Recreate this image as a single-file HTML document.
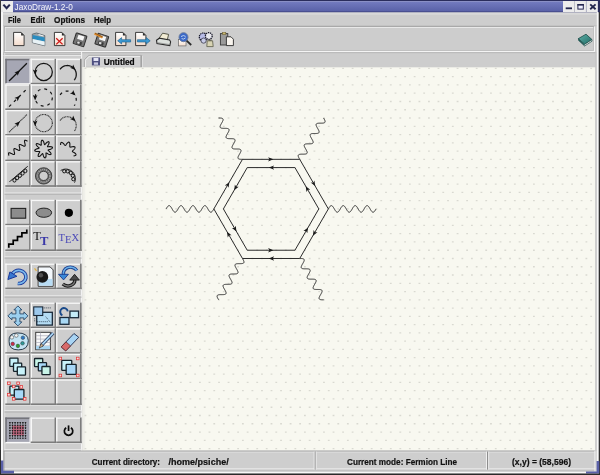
<!DOCTYPE html>
<html><head><meta charset="utf-8"><style>html,body{margin:0;padding:0;width:600px;height:475px;overflow:hidden;background:#d4d4d4}svg{display:block}</style></head>
<body><svg width="600" height="475" viewBox="0 0 600 475"><rect x="0.00" y="0.00" width="600.00" height="475.00" fill="#cdcdcd" /><defs><linearGradient id="tbg" x1="0" y1="0" x2="0" y2="1"><stop offset="0" stop-color="#7880c4"/><stop offset="1" stop-color="#565ea4"/></linearGradient></defs><rect x="0.00" y="0.00" width="600.00" height="12.50" fill="url(#tbg)" /><rect x="0.00" y="0.00" width="600.00" height="1.00" fill="#2a2d5c" /><rect x="1.00" y="1.00" width="599.00" height="1.00" fill="#8a90c6" /><rect x="0.00" y="11.50" width="600.00" height="1.00" fill="#3a3e7a" /><rect x="1.00" y="1.00" width="12.00" height="11.60" fill="#ececec" /><polyline points="3.4,4.6 6.6,8.2 9.8,4.6" fill="none" stroke="#23264e" stroke-width="2.1"/><g style="will-change:transform"><text x="14.60" y="10.40" font-family="Liberation Sans" font-size="9.2" font-weight="normal" fill="#f8f8fc" textLength="58.20" lengthAdjust="spacingAndGlyphs" >JaxoDraw-1.2-0</text></g><rect x="563.00" y="1.00" width="11.30" height="11.00" fill="#ececec" /><rect x="574.70" y="1.00" width="11.30" height="11.00" fill="#ececec" /><rect x="586.50" y="1.00" width="11.30" height="11.00" fill="#ececec" /><rect x="574.00" y="1.00" width="0.70" height="11.00" fill="#c8c8c8" /><rect x="585.80" y="1.00" width="0.70" height="11.00" fill="#c8c8c8" /><rect x="565.70" y="7.40" width="6.30" height="1.80" fill="#23264e" /><rect x="577.9" y="4.6" width="5.4" height="4.5" fill="#f0f0ff" stroke="#23264e" stroke-width="1.0"/><rect x="577.40" y="4.00" width="6.40" height="1.60" fill="#23264e" /><path d="M590.2,4.4 L595.6,9.2 M595.6,4.4 L590.2,9.2" stroke="#23264e" stroke-width="1.9"/><rect x="598.00" y="0.00" width="2.00" height="12.50" fill="#2a2d5c" /><rect x="3.00" y="12.50" width="594.00" height="13.00" fill="#cdcdcd" /><rect x="3.00" y="12.60" width="594.00" height="2.20" fill="#d8d8d8" /><rect x="3.00" y="25.40" width="594.00" height="0.80" fill="#bdbdbd" /><g style="will-change:transform"><text x="7.90" y="22.90" font-family="Liberation Sans" font-size="8.8" font-weight="bold" fill="#101010" textLength="12.90" lengthAdjust="spacingAndGlyphs" stroke="#101010" stroke-width="0.22">File</text></g><g style="will-change:transform"><text x="30.60" y="22.90" font-family="Liberation Sans" font-size="8.8" font-weight="bold" fill="#101010" textLength="14.40" lengthAdjust="spacingAndGlyphs" stroke="#101010" stroke-width="0.22">Edit</text></g><g style="will-change:transform"><text x="54.00" y="22.90" font-family="Liberation Sans" font-size="8.8" font-weight="bold" fill="#101010" textLength="31.00" lengthAdjust="spacingAndGlyphs" stroke="#101010" stroke-width="0.22">Options</text></g><g style="will-change:transform"><text x="94.00" y="22.90" font-family="Liberation Sans" font-size="8.8" font-weight="bold" fill="#101010" textLength="17.00" lengthAdjust="spacingAndGlyphs" stroke="#101010" stroke-width="0.22">Help</text></g><rect x="3.80" y="26.60" width="591.50" height="25.00" fill="#cdcdcd" /><rect x="4.10" y="26.30" width="589.90" height="0.90" fill="#9a9a9a" /><rect x="4.80" y="27.10" width="588.50" height="0.80" fill="#f2f2f2" /><rect x="4.10" y="26.60" width="0.80" height="24.40" fill="#a0a0a0" /><rect x="4.80" y="27.20" width="0.70" height="23.10" fill="#f0f0f0" /><rect x="5.70" y="50.20" width="587.60" height="0.70" fill="#b4b4b4" /><rect x="593.20" y="27.20" width="0.70" height="23.70" fill="#b4b4b4" /><rect x="5.00" y="50.90" width="590.00" height="1.10" fill="#f4f4f4" /><rect x="593.90" y="26.60" width="1.10" height="25.40" fill="#f4f4f4" /><rect x="3.20" y="52.10" width="593.60" height="1.10" fill="#bababa" /><defs>
<linearGradient id="docg" x1="0" y1="0" x2="0" y2="1"><stop offset="0" stop-color="#ffffff"/><stop offset="1" stop-color="#f4dccc"/></linearGradient>
<linearGradient id="blueg" x1="0" y1="0" x2="0" y2="1"><stop offset="0" stop-color="#7cc4e8"/><stop offset="0.5" stop-color="#1f82b8"/><stop offset="1" stop-color="#3a9ccc"/></linearGradient>
<linearGradient id="bookg" x1="0" y1="0" x2="1" y2="1"><stop offset="0" stop-color="#5fb0a8"/><stop offset="1" stop-color="#1e6a64"/></linearGradient>
</defs><path d="M13.6,32.4 L21.1,32.4 L24.1,35.4 L24.1,45.599999999999994 L13.6,45.599999999999994 Z" fill="url(#docg)" stroke="#2a2a2a" stroke-width="0.9"/><path d="M21.1,32.4 L24.1,35.4 L21.1,35.4 Z" fill="#2a2a2a"/><path d="M32.3,34.2 L36.5,33.0 L44.8,35.6 L44.8,45.8 L32.3,42.6 Z" fill="#9aa4aa" stroke="#606a70" stroke-width="0.9"/><path d="M32.6,35.0 L44.6,37.6 L44.6,41.6 L32.6,39.0 Z" fill="#2a8cc0"/><path d="M32.6,39.0 L44.6,41.6 L44.6,45.4 L32.6,42.4 Z" fill="#e8f2f6"/><path d="M38.5,34.0 L43.5,35.4 L43.5,36.4 L38.5,35.2 Z" fill="#f0f0f0"/><path d="M54.4,32.4 L61.900000000000006,32.4 L64.9,35.4 L64.9,45.599999999999994 L54.4,45.599999999999994 Z" fill="url(#docg)" stroke="#2a2a2a" stroke-width="0.9"/><path d="M61.900000000000006,32.4 L64.9,35.4 L61.900000000000006,35.4 Z" fill="#2a2a2a"/><path d="M56.2,38.2 L62.6,44.4 M62.6,38.2 L56.2,44.4" stroke="#d01818" stroke-width="1.3"/><g transform="rotate(18 80 39.8)"><rect x="74.4" y="34.2" width="11.2" height="11.2" rx="0.8" fill="#767676" stroke="#2e2e2e" stroke-width="1.0"/><rect x="77.0" y="35.4" width="6.2" height="4.4" fill="#f6f6f6"/><rect x="77.4" y="41.6" width="5.4" height="3.0" fill="#3a3a3a"/><rect x="78.2" y="42.0" width="2.4" height="2.0" fill="#e0e0e0"/></g><g transform="rotate(18 101.8 40.2)"><rect x="96.2" y="34.6" width="11.2" height="11.2" rx="0.8" fill="#767676" stroke="#2e2e2e" stroke-width="1.0"/><rect x="98.8" y="35.8" width="6.2" height="4.4" fill="#f6f6f6"/><rect x="99.2" y="42.0" width="5.4" height="3.0" fill="#3a3a3a"/><rect x="100.0" y="42.4" width="2.4" height="2.0" fill="#e0e0e0"/></g><path d="M94.5,33.5 L102.5,37.5" stroke="#e08a28" stroke-width="2.2"/><path d="M95,33.2 L102.8,37" stroke="#5a3a18" stroke-width="0.6"/><path d="M115.6,32.4 L122.89999999999999,32.4 L125.89999999999999,35.4 L125.89999999999999,45.599999999999994 L115.6,45.599999999999994 Z" fill="url(#docg)" stroke="#2a2a2a" stroke-width="0.9"/><path d="M122.89999999999999,32.4 L125.89999999999999,35.4 L122.89999999999999,35.4 Z" fill="#2a2a2a"/><path d="M117.6,40.8 L121.6,37.6 L121.6,39.7 L130.6,39.7 L130.6,42.0 L121.6,42.0 L121.6,44.0 Z" fill="#3c9ad4" stroke="#1a5a88" stroke-width="0.6"/><path d="M135.6,32.4 L142.9,32.4 L145.9,35.4 L145.9,45.599999999999994 L135.6,45.599999999999994 Z" fill="url(#docg)" stroke="#2a2a2a" stroke-width="0.9"/><path d="M142.9,32.4 L145.9,35.4 L142.9,35.4 Z" fill="#2a2a2a"/><path d="M150.2,40.8 L146.2,37.6 L146.2,39.7 L137.4,39.7 L137.4,42.0 L146.2,42.0 L146.2,44.0 Z" fill="#3c9ad4" stroke="#1a5a88" stroke-width="0.6"/><path d="M158.5,39.0 L162.6,33.2 L168.6,34.4 L167.2,40.4 Z" fill="#f2ecd4" stroke="#4a4a3a" stroke-width="0.9"/><path d="M156.5,40.2 L159.4,38.2 L169.6,40.0 L170.6,41.8 L169.8,45.6 L157.0,43.6 Z" fill="#dce0dc" stroke="#2a2a2a" stroke-width="1.1"/><path d="M157.2,42.6 L169.8,44.6" stroke="#8a8a8a" stroke-width="0.7"/><rect x="178.6" y="39.5" width="7.4" height="6.4" fill="url(#docg)" stroke="#6a6a6a" stroke-width="0.7"/><circle cx="183.5" cy="37.2" r="4.5" fill="#3a68c8" stroke="#6a7a9a" stroke-width="0.9"/><path d="M181.0,36.6 Q183.4,34.6 185.6,36.4 M181.6,38.6 Q183.6,40 185.6,37.8" stroke="#c8dcf4" stroke-width="0.9" fill="none"/><path d="M186.6,40.6 L191.2,45.0" stroke="#2a2a2a" stroke-width="1.8"/><circle cx="203.2" cy="37.0" r="3.9" fill="#b8bce8" stroke="#1a1a2a" stroke-width="1.3" stroke-dasharray="1.4,0.7"/><circle cx="208.8" cy="36.0" r="3.4" fill="#e8e8ee" stroke="#1a1a2a" stroke-width="1.3" stroke-dasharray="1.4,0.7"/><circle cx="203.6" cy="40.6" r="2.6" fill="#c8cce8" stroke="#3a3a4a" stroke-width="0.8"/><path d="M207.2,40.8 L212.6,40.8 L213.2,46.6 L206.8,46.6 Z" fill="#d8d4b4" stroke="#5a5a48" stroke-width="0.8"/><rect x="208.6" y="39.6" width="3" height="1.4" fill="#6a6a5a"/><rect x="220.4" y="33.6" width="7.4" height="11.4" fill="#9a9a9a" stroke="#3a3a3a" stroke-width="0.9"/><rect x="222.6" y="32.4" width="3.2" height="2" fill="#c8b870" stroke="#6a5a2a" stroke-width="0.5"/><path d="M226.4,36.8 L231,36.8 L233.4,39.2 L233.4,45.6 L226.4,45.6 Z" fill="#f8f4ee" stroke="#2a2a2a" stroke-width="0.9"/><path d="M578.4,38.6 L586.0,34.2 L592.0,39.6 L584.6,44.4 Z" fill="url(#bookg)" stroke="#1a4844" stroke-width="0.8"/><path d="M578.4,38.6 L578.6,40.4 L584.6,46.0 L592.0,41.2 L592.0,39.6 L584.6,44.4 Z" fill="#f4f4f4" stroke="#1a4844" stroke-width="0.7"/><path d="M578.4,38.6 L584.6,44.4 L584.6,46.0 L578.6,40.4 Z" fill="#1e5a56"/><rect x="3.00" y="54.30" width="78.00" height="0.90" fill="#b4b4b4" /><rect x="3.00" y="55.20" width="78.00" height="0.80" fill="#f0f0f0" /><path d="M84.4,67.4 L84.4,59.8 L88.8,55.4 L141.6,55.4 L141.6,67.4 Z" fill="#d2d2d2" stroke="#9c9c9c" stroke-width="0.8"/><path d="M85.4,67.2 L85.4,60.2 L89.2,56.3 L140.4,56.3" fill="none" stroke="#f4f4f4" stroke-width="0.9"/><rect x="140.60" y="56.00" width="1.20" height="11.40" fill="#8a8a8a" /><rect x="141.80" y="56.00" width="0.80" height="11.40" fill="#ececec" /><rect x="91.90" y="57.50" width="8.10" height="7.90" fill="#4e5080" /><rect x="93.50" y="58.00" width="4.90" height="3.00" fill="#e4e4f4" /><rect x="93.90" y="62.40" width="4.10" height="2.40" fill="#c8c8e0" /><g style="will-change:transform"><text x="103.70" y="64.50" font-family="Liberation Sans" font-size="8.6" font-weight="bold" fill="#0a0a0a" textLength="31.00" lengthAdjust="spacingAndGlyphs" stroke="#0a0a0a" stroke-width="0.2">Untitled</text></g><rect x="82.30" y="67.30" width="513.10" height="383.40" fill="#f8f8f0" /><rect x="82.00" y="67.30" width="1.60" height="383.40" fill="#e6e6e0" /><rect x="83.60" y="67.30" width="1.60" height="383.40" fill="#f0f0ea" /><rect x="81.00" y="51.50" width="1.10" height="399.50" fill="#f2f2f2" /><rect x="595.40" y="52.00" width="1.40" height="399.00" fill="#c4c4c4" /><path d="M84.53,68.43h1.8M94.07,68.43h1.8M103.61,68.43h1.8M113.16,68.43h1.8M122.70,68.43h1.8M132.24,68.43h1.8M141.78,68.43h1.8M151.32,68.43h1.8M160.87,68.43h1.8M170.41,68.43h1.8M179.95,68.43h1.8M189.49,68.43h1.8M199.03,68.43h1.8M208.58,68.43h1.8M218.12,68.43h1.8M227.66,68.43h1.8M237.20,68.43h1.8M246.74,68.43h1.8M256.29,68.43h1.8M265.83,68.43h1.8M275.37,68.43h1.8M284.91,68.43h1.8M294.45,68.43h1.8M304.00,68.43h1.8M313.54,68.43h1.8M323.08,68.43h1.8M332.62,68.43h1.8M342.16,68.43h1.8M351.71,68.43h1.8M361.25,68.43h1.8M370.79,68.43h1.8M380.33,68.43h1.8M389.87,68.43h1.8M399.42,68.43h1.8M408.96,68.43h1.8M418.50,68.43h1.8M428.04,68.43h1.8M437.58,68.43h1.8M447.13,68.43h1.8M456.67,68.43h1.8M466.21,68.43h1.8M475.75,68.43h1.8M485.29,68.43h1.8M494.84,68.43h1.8M504.38,68.43h1.8M513.92,68.43h1.8M523.46,68.43h1.8M533.00,68.43h1.8M542.55,68.43h1.8M552.09,68.43h1.8M561.63,68.43h1.8M571.17,68.43h1.8M580.71,68.43h1.8M590.26,68.43h1.8M89.30,76.69h1.8M98.84,76.69h1.8M108.39,76.69h1.8M117.93,76.69h1.8M127.47,76.69h1.8M137.01,76.69h1.8M146.55,76.69h1.8M156.09,76.69h1.8M165.64,76.69h1.8M175.18,76.69h1.8M184.72,76.69h1.8M194.26,76.69h1.8M203.81,76.69h1.8M213.35,76.69h1.8M222.89,76.69h1.8M232.43,76.69h1.8M241.97,76.69h1.8M251.51,76.69h1.8M261.06,76.69h1.8M270.60,76.69h1.8M280.14,76.69h1.8M289.68,76.69h1.8M299.23,76.69h1.8M308.77,76.69h1.8M318.31,76.69h1.8M327.85,76.69h1.8M337.39,76.69h1.8M346.94,76.69h1.8M356.48,76.69h1.8M366.02,76.69h1.8M375.56,76.69h1.8M385.10,76.69h1.8M394.64,76.69h1.8M404.19,76.69h1.8M413.73,76.69h1.8M423.27,76.69h1.8M432.81,76.69h1.8M442.35,76.69h1.8M451.90,76.69h1.8M461.44,76.69h1.8M470.98,76.69h1.8M480.52,76.69h1.8M490.06,76.69h1.8M499.61,76.69h1.8M509.15,76.69h1.8M518.69,76.69h1.8M528.23,76.69h1.8M537.77,76.69h1.8M547.32,76.69h1.8M556.86,76.69h1.8M566.40,76.69h1.8M575.94,76.69h1.8M585.49,76.69h1.8M84.53,84.96h1.8M94.07,84.96h1.8M103.61,84.96h1.8M113.16,84.96h1.8M122.70,84.96h1.8M132.24,84.96h1.8M141.78,84.96h1.8M151.32,84.96h1.8M160.87,84.96h1.8M170.41,84.96h1.8M179.95,84.96h1.8M189.49,84.96h1.8M199.03,84.96h1.8M208.58,84.96h1.8M218.12,84.96h1.8M227.66,84.96h1.8M237.20,84.96h1.8M246.74,84.96h1.8M256.29,84.96h1.8M265.83,84.96h1.8M275.37,84.96h1.8M284.91,84.96h1.8M294.45,84.96h1.8M304.00,84.96h1.8M313.54,84.96h1.8M323.08,84.96h1.8M332.62,84.96h1.8M342.16,84.96h1.8M351.71,84.96h1.8M361.25,84.96h1.8M370.79,84.96h1.8M380.33,84.96h1.8M389.87,84.96h1.8M399.42,84.96h1.8M408.96,84.96h1.8M418.50,84.96h1.8M428.04,84.96h1.8M437.58,84.96h1.8M447.13,84.96h1.8M456.67,84.96h1.8M466.21,84.96h1.8M475.75,84.96h1.8M485.29,84.96h1.8M494.84,84.96h1.8M504.38,84.96h1.8M513.92,84.96h1.8M523.46,84.96h1.8M533.00,84.96h1.8M542.55,84.96h1.8M552.09,84.96h1.8M561.63,84.96h1.8M571.17,84.96h1.8M580.71,84.96h1.8M590.26,84.96h1.8M89.30,93.22h1.8M98.84,93.22h1.8M108.39,93.22h1.8M117.93,93.22h1.8M127.47,93.22h1.8M137.01,93.22h1.8M146.55,93.22h1.8M156.09,93.22h1.8M165.64,93.22h1.8M175.18,93.22h1.8M184.72,93.22h1.8M194.26,93.22h1.8M203.81,93.22h1.8M213.35,93.22h1.8M222.89,93.22h1.8M232.43,93.22h1.8M241.97,93.22h1.8M251.51,93.22h1.8M261.06,93.22h1.8M270.60,93.22h1.8M280.14,93.22h1.8M289.68,93.22h1.8M299.23,93.22h1.8M308.77,93.22h1.8M318.31,93.22h1.8M327.85,93.22h1.8M337.39,93.22h1.8M346.94,93.22h1.8M356.48,93.22h1.8M366.02,93.22h1.8M375.56,93.22h1.8M385.10,93.22h1.8M394.64,93.22h1.8M404.19,93.22h1.8M413.73,93.22h1.8M423.27,93.22h1.8M432.81,93.22h1.8M442.35,93.22h1.8M451.90,93.22h1.8M461.44,93.22h1.8M470.98,93.22h1.8M480.52,93.22h1.8M490.06,93.22h1.8M499.61,93.22h1.8M509.15,93.22h1.8M518.69,93.22h1.8M528.23,93.22h1.8M537.77,93.22h1.8M547.32,93.22h1.8M556.86,93.22h1.8M566.40,93.22h1.8M575.94,93.22h1.8M585.49,93.22h1.8M84.53,101.48h1.8M94.07,101.48h1.8M103.61,101.48h1.8M113.16,101.48h1.8M122.70,101.48h1.8M132.24,101.48h1.8M141.78,101.48h1.8M151.32,101.48h1.8M160.87,101.48h1.8M170.41,101.48h1.8M179.95,101.48h1.8M189.49,101.48h1.8M199.03,101.48h1.8M208.58,101.48h1.8M218.12,101.48h1.8M227.66,101.48h1.8M237.20,101.48h1.8M246.74,101.48h1.8M256.29,101.48h1.8M265.83,101.48h1.8M275.37,101.48h1.8M284.91,101.48h1.8M294.45,101.48h1.8M304.00,101.48h1.8M313.54,101.48h1.8M323.08,101.48h1.8M332.62,101.48h1.8M342.16,101.48h1.8M351.71,101.48h1.8M361.25,101.48h1.8M370.79,101.48h1.8M380.33,101.48h1.8M389.87,101.48h1.8M399.42,101.48h1.8M408.96,101.48h1.8M418.50,101.48h1.8M428.04,101.48h1.8M437.58,101.48h1.8M447.13,101.48h1.8M456.67,101.48h1.8M466.21,101.48h1.8M475.75,101.48h1.8M485.29,101.48h1.8M494.84,101.48h1.8M504.38,101.48h1.8M513.92,101.48h1.8M523.46,101.48h1.8M533.00,101.48h1.8M542.55,101.48h1.8M552.09,101.48h1.8M561.63,101.48h1.8M571.17,101.48h1.8M580.71,101.48h1.8M590.26,101.48h1.8M89.30,109.75h1.8M98.84,109.75h1.8M108.39,109.75h1.8M117.93,109.75h1.8M127.47,109.75h1.8M137.01,109.75h1.8M146.55,109.75h1.8M156.09,109.75h1.8M165.64,109.75h1.8M175.18,109.75h1.8M184.72,109.75h1.8M194.26,109.75h1.8M203.81,109.75h1.8M213.35,109.75h1.8M222.89,109.75h1.8M232.43,109.75h1.8M241.97,109.75h1.8M251.51,109.75h1.8M261.06,109.75h1.8M270.60,109.75h1.8M280.14,109.75h1.8M289.68,109.75h1.8M299.23,109.75h1.8M308.77,109.75h1.8M318.31,109.75h1.8M327.85,109.75h1.8M337.39,109.75h1.8M346.94,109.75h1.8M356.48,109.75h1.8M366.02,109.75h1.8M375.56,109.75h1.8M385.10,109.75h1.8M394.64,109.75h1.8M404.19,109.75h1.8M413.73,109.75h1.8M423.27,109.75h1.8M432.81,109.75h1.8M442.35,109.75h1.8M451.90,109.75h1.8M461.44,109.75h1.8M470.98,109.75h1.8M480.52,109.75h1.8M490.06,109.75h1.8M499.61,109.75h1.8M509.15,109.75h1.8M518.69,109.75h1.8M528.23,109.75h1.8M537.77,109.75h1.8M547.32,109.75h1.8M556.86,109.75h1.8M566.40,109.75h1.8M575.94,109.75h1.8M585.49,109.75h1.8M84.53,118.01h1.8M94.07,118.01h1.8M103.61,118.01h1.8M113.16,118.01h1.8M122.70,118.01h1.8M132.24,118.01h1.8M141.78,118.01h1.8M151.32,118.01h1.8M160.87,118.01h1.8M170.41,118.01h1.8M179.95,118.01h1.8M189.49,118.01h1.8M199.03,118.01h1.8M208.58,118.01h1.8M218.12,118.01h1.8M227.66,118.01h1.8M237.20,118.01h1.8M246.74,118.01h1.8M256.29,118.01h1.8M265.83,118.01h1.8M275.37,118.01h1.8M284.91,118.01h1.8M294.45,118.01h1.8M304.00,118.01h1.8M313.54,118.01h1.8M323.08,118.01h1.8M332.62,118.01h1.8M342.16,118.01h1.8M351.71,118.01h1.8M361.25,118.01h1.8M370.79,118.01h1.8M380.33,118.01h1.8M389.87,118.01h1.8M399.42,118.01h1.8M408.96,118.01h1.8M418.50,118.01h1.8M428.04,118.01h1.8M437.58,118.01h1.8M447.13,118.01h1.8M456.67,118.01h1.8M466.21,118.01h1.8M475.75,118.01h1.8M485.29,118.01h1.8M494.84,118.01h1.8M504.38,118.01h1.8M513.92,118.01h1.8M523.46,118.01h1.8M533.00,118.01h1.8M542.55,118.01h1.8M552.09,118.01h1.8M561.63,118.01h1.8M571.17,118.01h1.8M580.71,118.01h1.8M590.26,118.01h1.8M89.30,126.28h1.8M98.84,126.28h1.8M108.39,126.28h1.8M117.93,126.28h1.8M127.47,126.28h1.8M137.01,126.28h1.8M146.55,126.28h1.8M156.09,126.28h1.8M165.64,126.28h1.8M175.18,126.28h1.8M184.72,126.28h1.8M194.26,126.28h1.8M203.81,126.28h1.8M213.35,126.28h1.8M222.89,126.28h1.8M232.43,126.28h1.8M241.97,126.28h1.8M251.51,126.28h1.8M261.06,126.28h1.8M270.60,126.28h1.8M280.14,126.28h1.8M289.68,126.28h1.8M299.23,126.28h1.8M308.77,126.28h1.8M318.31,126.28h1.8M327.85,126.28h1.8M337.39,126.28h1.8M346.94,126.28h1.8M356.48,126.28h1.8M366.02,126.28h1.8M375.56,126.28h1.8M385.10,126.28h1.8M394.64,126.28h1.8M404.19,126.28h1.8M413.73,126.28h1.8M423.27,126.28h1.8M432.81,126.28h1.8M442.35,126.28h1.8M451.90,126.28h1.8M461.44,126.28h1.8M470.98,126.28h1.8M480.52,126.28h1.8M490.06,126.28h1.8M499.61,126.28h1.8M509.15,126.28h1.8M518.69,126.28h1.8M528.23,126.28h1.8M537.77,126.28h1.8M547.32,126.28h1.8M556.86,126.28h1.8M566.40,126.28h1.8M575.94,126.28h1.8M585.49,126.28h1.8M84.53,134.54h1.8M94.07,134.54h1.8M103.61,134.54h1.8M113.16,134.54h1.8M122.70,134.54h1.8M132.24,134.54h1.8M141.78,134.54h1.8M151.32,134.54h1.8M160.87,134.54h1.8M170.41,134.54h1.8M179.95,134.54h1.8M189.49,134.54h1.8M199.03,134.54h1.8M208.58,134.54h1.8M218.12,134.54h1.8M227.66,134.54h1.8M237.20,134.54h1.8M246.74,134.54h1.8M256.29,134.54h1.8M265.83,134.54h1.8M275.37,134.54h1.8M284.91,134.54h1.8M294.45,134.54h1.8M304.00,134.54h1.8M313.54,134.54h1.8M323.08,134.54h1.8M332.62,134.54h1.8M342.16,134.54h1.8M351.71,134.54h1.8M361.25,134.54h1.8M370.79,134.54h1.8M380.33,134.54h1.8M389.87,134.54h1.8M399.42,134.54h1.8M408.96,134.54h1.8M418.50,134.54h1.8M428.04,134.54h1.8M437.58,134.54h1.8M447.13,134.54h1.8M456.67,134.54h1.8M466.21,134.54h1.8M475.75,134.54h1.8M485.29,134.54h1.8M494.84,134.54h1.8M504.38,134.54h1.8M513.92,134.54h1.8M523.46,134.54h1.8M533.00,134.54h1.8M542.55,134.54h1.8M552.09,134.54h1.8M561.63,134.54h1.8M571.17,134.54h1.8M580.71,134.54h1.8M590.26,134.54h1.8M89.30,142.80h1.8M98.84,142.80h1.8M108.39,142.80h1.8M117.93,142.80h1.8M127.47,142.80h1.8M137.01,142.80h1.8M146.55,142.80h1.8M156.09,142.80h1.8M165.64,142.80h1.8M175.18,142.80h1.8M184.72,142.80h1.8M194.26,142.80h1.8M203.81,142.80h1.8M213.35,142.80h1.8M222.89,142.80h1.8M232.43,142.80h1.8M241.97,142.80h1.8M251.51,142.80h1.8M261.06,142.80h1.8M270.60,142.80h1.8M280.14,142.80h1.8M289.68,142.80h1.8M299.23,142.80h1.8M308.77,142.80h1.8M318.31,142.80h1.8M327.85,142.80h1.8M337.39,142.80h1.8M346.94,142.80h1.8M356.48,142.80h1.8M366.02,142.80h1.8M375.56,142.80h1.8M385.10,142.80h1.8M394.64,142.80h1.8M404.19,142.80h1.8M413.73,142.80h1.8M423.27,142.80h1.8M432.81,142.80h1.8M442.35,142.80h1.8M451.90,142.80h1.8M461.44,142.80h1.8M470.98,142.80h1.8M480.52,142.80h1.8M490.06,142.80h1.8M499.61,142.80h1.8M509.15,142.80h1.8M518.69,142.80h1.8M528.23,142.80h1.8M537.77,142.80h1.8M547.32,142.80h1.8M556.86,142.80h1.8M566.40,142.80h1.8M575.94,142.80h1.8M585.49,142.80h1.8M84.53,151.07h1.8M94.07,151.07h1.8M103.61,151.07h1.8M113.16,151.07h1.8M122.70,151.07h1.8M132.24,151.07h1.8M141.78,151.07h1.8M151.32,151.07h1.8M160.87,151.07h1.8M170.41,151.07h1.8M179.95,151.07h1.8M189.49,151.07h1.8M199.03,151.07h1.8M208.58,151.07h1.8M218.12,151.07h1.8M227.66,151.07h1.8M237.20,151.07h1.8M246.74,151.07h1.8M256.29,151.07h1.8M265.83,151.07h1.8M275.37,151.07h1.8M284.91,151.07h1.8M294.45,151.07h1.8M304.00,151.07h1.8M313.54,151.07h1.8M323.08,151.07h1.8M332.62,151.07h1.8M342.16,151.07h1.8M351.71,151.07h1.8M361.25,151.07h1.8M370.79,151.07h1.8M380.33,151.07h1.8M389.87,151.07h1.8M399.42,151.07h1.8M408.96,151.07h1.8M418.50,151.07h1.8M428.04,151.07h1.8M437.58,151.07h1.8M447.13,151.07h1.8M456.67,151.07h1.8M466.21,151.07h1.8M475.75,151.07h1.8M485.29,151.07h1.8M494.84,151.07h1.8M504.38,151.07h1.8M513.92,151.07h1.8M523.46,151.07h1.8M533.00,151.07h1.8M542.55,151.07h1.8M552.09,151.07h1.8M561.63,151.07h1.8M571.17,151.07h1.8M580.71,151.07h1.8M590.26,151.07h1.8M89.30,159.33h1.8M98.84,159.33h1.8M108.39,159.33h1.8M117.93,159.33h1.8M127.47,159.33h1.8M137.01,159.33h1.8M146.55,159.33h1.8M156.09,159.33h1.8M165.64,159.33h1.8M175.18,159.33h1.8M184.72,159.33h1.8M194.26,159.33h1.8M203.81,159.33h1.8M213.35,159.33h1.8M222.89,159.33h1.8M232.43,159.33h1.8M241.97,159.33h1.8M251.51,159.33h1.8M261.06,159.33h1.8M270.60,159.33h1.8M280.14,159.33h1.8M289.68,159.33h1.8M299.23,159.33h1.8M308.77,159.33h1.8M318.31,159.33h1.8M327.85,159.33h1.8M337.39,159.33h1.8M346.94,159.33h1.8M356.48,159.33h1.8M366.02,159.33h1.8M375.56,159.33h1.8M385.10,159.33h1.8M394.64,159.33h1.8M404.19,159.33h1.8M413.73,159.33h1.8M423.27,159.33h1.8M432.81,159.33h1.8M442.35,159.33h1.8M451.90,159.33h1.8M461.44,159.33h1.8M470.98,159.33h1.8M480.52,159.33h1.8M490.06,159.33h1.8M499.61,159.33h1.8M509.15,159.33h1.8M518.69,159.33h1.8M528.23,159.33h1.8M537.77,159.33h1.8M547.32,159.33h1.8M556.86,159.33h1.8M566.40,159.33h1.8M575.94,159.33h1.8M585.49,159.33h1.8M84.53,167.59h1.8M94.07,167.59h1.8M103.61,167.59h1.8M113.16,167.59h1.8M122.70,167.59h1.8M132.24,167.59h1.8M141.78,167.59h1.8M151.32,167.59h1.8M160.87,167.59h1.8M170.41,167.59h1.8M179.95,167.59h1.8M189.49,167.59h1.8M199.03,167.59h1.8M208.58,167.59h1.8M218.12,167.59h1.8M227.66,167.59h1.8M237.20,167.59h1.8M246.74,167.59h1.8M256.29,167.59h1.8M265.83,167.59h1.8M275.37,167.59h1.8M284.91,167.59h1.8M294.45,167.59h1.8M304.00,167.59h1.8M313.54,167.59h1.8M323.08,167.59h1.8M332.62,167.59h1.8M342.16,167.59h1.8M351.71,167.59h1.8M361.25,167.59h1.8M370.79,167.59h1.8M380.33,167.59h1.8M389.87,167.59h1.8M399.42,167.59h1.8M408.96,167.59h1.8M418.50,167.59h1.8M428.04,167.59h1.8M437.58,167.59h1.8M447.13,167.59h1.8M456.67,167.59h1.8M466.21,167.59h1.8M475.75,167.59h1.8M485.29,167.59h1.8M494.84,167.59h1.8M504.38,167.59h1.8M513.92,167.59h1.8M523.46,167.59h1.8M533.00,167.59h1.8M542.55,167.59h1.8M552.09,167.59h1.8M561.63,167.59h1.8M571.17,167.59h1.8M580.71,167.59h1.8M590.26,167.59h1.8M89.30,175.86h1.8M98.84,175.86h1.8M108.39,175.86h1.8M117.93,175.86h1.8M127.47,175.86h1.8M137.01,175.86h1.8M146.55,175.86h1.8M156.09,175.86h1.8M165.64,175.86h1.8M175.18,175.86h1.8M184.72,175.86h1.8M194.26,175.86h1.8M203.81,175.86h1.8M213.35,175.86h1.8M222.89,175.86h1.8M232.43,175.86h1.8M241.97,175.86h1.8M251.51,175.86h1.8M261.06,175.86h1.8M270.60,175.86h1.8M280.14,175.86h1.8M289.68,175.86h1.8M299.23,175.86h1.8M308.77,175.86h1.8M318.31,175.86h1.8M327.85,175.86h1.8M337.39,175.86h1.8M346.94,175.86h1.8M356.48,175.86h1.8M366.02,175.86h1.8M375.56,175.86h1.8M385.10,175.86h1.8M394.64,175.86h1.8M404.19,175.86h1.8M413.73,175.86h1.8M423.27,175.86h1.8M432.81,175.86h1.8M442.35,175.86h1.8M451.90,175.86h1.8M461.44,175.86h1.8M470.98,175.86h1.8M480.52,175.86h1.8M490.06,175.86h1.8M499.61,175.86h1.8M509.15,175.86h1.8M518.69,175.86h1.8M528.23,175.86h1.8M537.77,175.86h1.8M547.32,175.86h1.8M556.86,175.86h1.8M566.40,175.86h1.8M575.94,175.86h1.8M585.49,175.86h1.8M84.53,184.12h1.8M94.07,184.12h1.8M103.61,184.12h1.8M113.16,184.12h1.8M122.70,184.12h1.8M132.24,184.12h1.8M141.78,184.12h1.8M151.32,184.12h1.8M160.87,184.12h1.8M170.41,184.12h1.8M179.95,184.12h1.8M189.49,184.12h1.8M199.03,184.12h1.8M208.58,184.12h1.8M218.12,184.12h1.8M227.66,184.12h1.8M237.20,184.12h1.8M246.74,184.12h1.8M256.29,184.12h1.8M265.83,184.12h1.8M275.37,184.12h1.8M284.91,184.12h1.8M294.45,184.12h1.8M304.00,184.12h1.8M313.54,184.12h1.8M323.08,184.12h1.8M332.62,184.12h1.8M342.16,184.12h1.8M351.71,184.12h1.8M361.25,184.12h1.8M370.79,184.12h1.8M380.33,184.12h1.8M389.87,184.12h1.8M399.42,184.12h1.8M408.96,184.12h1.8M418.50,184.12h1.8M428.04,184.12h1.8M437.58,184.12h1.8M447.13,184.12h1.8M456.67,184.12h1.8M466.21,184.12h1.8M475.75,184.12h1.8M485.29,184.12h1.8M494.84,184.12h1.8M504.38,184.12h1.8M513.92,184.12h1.8M523.46,184.12h1.8M533.00,184.12h1.8M542.55,184.12h1.8M552.09,184.12h1.8M561.63,184.12h1.8M571.17,184.12h1.8M580.71,184.12h1.8M590.26,184.12h1.8M89.30,192.38h1.8M98.84,192.38h1.8M108.39,192.38h1.8M117.93,192.38h1.8M127.47,192.38h1.8M137.01,192.38h1.8M146.55,192.38h1.8M156.09,192.38h1.8M165.64,192.38h1.8M175.18,192.38h1.8M184.72,192.38h1.8M194.26,192.38h1.8M203.81,192.38h1.8M213.35,192.38h1.8M222.89,192.38h1.8M232.43,192.38h1.8M241.97,192.38h1.8M251.51,192.38h1.8M261.06,192.38h1.8M270.60,192.38h1.8M280.14,192.38h1.8M289.68,192.38h1.8M299.23,192.38h1.8M308.77,192.38h1.8M318.31,192.38h1.8M327.85,192.38h1.8M337.39,192.38h1.8M346.94,192.38h1.8M356.48,192.38h1.8M366.02,192.38h1.8M375.56,192.38h1.8M385.10,192.38h1.8M394.64,192.38h1.8M404.19,192.38h1.8M413.73,192.38h1.8M423.27,192.38h1.8M432.81,192.38h1.8M442.35,192.38h1.8M451.90,192.38h1.8M461.44,192.38h1.8M470.98,192.38h1.8M480.52,192.38h1.8M490.06,192.38h1.8M499.61,192.38h1.8M509.15,192.38h1.8M518.69,192.38h1.8M528.23,192.38h1.8M537.77,192.38h1.8M547.32,192.38h1.8M556.86,192.38h1.8M566.40,192.38h1.8M575.94,192.38h1.8M585.49,192.38h1.8M84.53,200.65h1.8M94.07,200.65h1.8M103.61,200.65h1.8M113.16,200.65h1.8M122.70,200.65h1.8M132.24,200.65h1.8M141.78,200.65h1.8M151.32,200.65h1.8M160.87,200.65h1.8M170.41,200.65h1.8M179.95,200.65h1.8M189.49,200.65h1.8M199.03,200.65h1.8M208.58,200.65h1.8M218.12,200.65h1.8M227.66,200.65h1.8M237.20,200.65h1.8M246.74,200.65h1.8M256.29,200.65h1.8M265.83,200.65h1.8M275.37,200.65h1.8M284.91,200.65h1.8M294.45,200.65h1.8M304.00,200.65h1.8M313.54,200.65h1.8M323.08,200.65h1.8M332.62,200.65h1.8M342.16,200.65h1.8M351.71,200.65h1.8M361.25,200.65h1.8M370.79,200.65h1.8M380.33,200.65h1.8M389.87,200.65h1.8M399.42,200.65h1.8M408.96,200.65h1.8M418.50,200.65h1.8M428.04,200.65h1.8M437.58,200.65h1.8M447.13,200.65h1.8M456.67,200.65h1.8M466.21,200.65h1.8M475.75,200.65h1.8M485.29,200.65h1.8M494.84,200.65h1.8M504.38,200.65h1.8M513.92,200.65h1.8M523.46,200.65h1.8M533.00,200.65h1.8M542.55,200.65h1.8M552.09,200.65h1.8M561.63,200.65h1.8M571.17,200.65h1.8M580.71,200.65h1.8M590.26,200.65h1.8M89.30,208.91h1.8M98.84,208.91h1.8M108.39,208.91h1.8M117.93,208.91h1.8M127.47,208.91h1.8M137.01,208.91h1.8M146.55,208.91h1.8M156.09,208.91h1.8M165.64,208.91h1.8M175.18,208.91h1.8M184.72,208.91h1.8M194.26,208.91h1.8M203.81,208.91h1.8M213.35,208.91h1.8M222.89,208.91h1.8M232.43,208.91h1.8M241.97,208.91h1.8M251.51,208.91h1.8M261.06,208.91h1.8M270.60,208.91h1.8M280.14,208.91h1.8M289.68,208.91h1.8M299.23,208.91h1.8M308.77,208.91h1.8M318.31,208.91h1.8M327.85,208.91h1.8M337.39,208.91h1.8M346.94,208.91h1.8M356.48,208.91h1.8M366.02,208.91h1.8M375.56,208.91h1.8M385.10,208.91h1.8M394.64,208.91h1.8M404.19,208.91h1.8M413.73,208.91h1.8M423.27,208.91h1.8M432.81,208.91h1.8M442.35,208.91h1.8M451.90,208.91h1.8M461.44,208.91h1.8M470.98,208.91h1.8M480.52,208.91h1.8M490.06,208.91h1.8M499.61,208.91h1.8M509.15,208.91h1.8M518.69,208.91h1.8M528.23,208.91h1.8M537.77,208.91h1.8M547.32,208.91h1.8M556.86,208.91h1.8M566.40,208.91h1.8M575.94,208.91h1.8M585.49,208.91h1.8M84.53,217.18h1.8M94.07,217.18h1.8M103.61,217.18h1.8M113.16,217.18h1.8M122.70,217.18h1.8M132.24,217.18h1.8M141.78,217.18h1.8M151.32,217.18h1.8M160.87,217.18h1.8M170.41,217.18h1.8M179.95,217.18h1.8M189.49,217.18h1.8M199.03,217.18h1.8M208.58,217.18h1.8M218.12,217.18h1.8M227.66,217.18h1.8M237.20,217.18h1.8M246.74,217.18h1.8M256.29,217.18h1.8M265.83,217.18h1.8M275.37,217.18h1.8M284.91,217.18h1.8M294.45,217.18h1.8M304.00,217.18h1.8M313.54,217.18h1.8M323.08,217.18h1.8M332.62,217.18h1.8M342.16,217.18h1.8M351.71,217.18h1.8M361.25,217.18h1.8M370.79,217.18h1.8M380.33,217.18h1.8M389.87,217.18h1.8M399.42,217.18h1.8M408.96,217.18h1.8M418.50,217.18h1.8M428.04,217.18h1.8M437.58,217.18h1.8M447.13,217.18h1.8M456.67,217.18h1.8M466.21,217.18h1.8M475.75,217.18h1.8M485.29,217.18h1.8M494.84,217.18h1.8M504.38,217.18h1.8M513.92,217.18h1.8M523.46,217.18h1.8M533.00,217.18h1.8M542.55,217.18h1.8M552.09,217.18h1.8M561.63,217.18h1.8M571.17,217.18h1.8M580.71,217.18h1.8M590.26,217.18h1.8M89.30,225.44h1.8M98.84,225.44h1.8M108.39,225.44h1.8M117.93,225.44h1.8M127.47,225.44h1.8M137.01,225.44h1.8M146.55,225.44h1.8M156.09,225.44h1.8M165.64,225.44h1.8M175.18,225.44h1.8M184.72,225.44h1.8M194.26,225.44h1.8M203.81,225.44h1.8M213.35,225.44h1.8M222.89,225.44h1.8M232.43,225.44h1.8M241.97,225.44h1.8M251.51,225.44h1.8M261.06,225.44h1.8M270.60,225.44h1.8M280.14,225.44h1.8M289.68,225.44h1.8M299.23,225.44h1.8M308.77,225.44h1.8M318.31,225.44h1.8M327.85,225.44h1.8M337.39,225.44h1.8M346.94,225.44h1.8M356.48,225.44h1.8M366.02,225.44h1.8M375.56,225.44h1.8M385.10,225.44h1.8M394.64,225.44h1.8M404.19,225.44h1.8M413.73,225.44h1.8M423.27,225.44h1.8M432.81,225.44h1.8M442.35,225.44h1.8M451.90,225.44h1.8M461.44,225.44h1.8M470.98,225.44h1.8M480.52,225.44h1.8M490.06,225.44h1.8M499.61,225.44h1.8M509.15,225.44h1.8M518.69,225.44h1.8M528.23,225.44h1.8M537.77,225.44h1.8M547.32,225.44h1.8M556.86,225.44h1.8M566.40,225.44h1.8M575.94,225.44h1.8M585.49,225.44h1.8M84.53,233.70h1.8M94.07,233.70h1.8M103.61,233.70h1.8M113.16,233.70h1.8M122.70,233.70h1.8M132.24,233.70h1.8M141.78,233.70h1.8M151.32,233.70h1.8M160.87,233.70h1.8M170.41,233.70h1.8M179.95,233.70h1.8M189.49,233.70h1.8M199.03,233.70h1.8M208.58,233.70h1.8M218.12,233.70h1.8M227.66,233.70h1.8M237.20,233.70h1.8M246.74,233.70h1.8M256.29,233.70h1.8M265.83,233.70h1.8M275.37,233.70h1.8M284.91,233.70h1.8M294.45,233.70h1.8M304.00,233.70h1.8M313.54,233.70h1.8M323.08,233.70h1.8M332.62,233.70h1.8M342.16,233.70h1.8M351.71,233.70h1.8M361.25,233.70h1.8M370.79,233.70h1.8M380.33,233.70h1.8M389.87,233.70h1.8M399.42,233.70h1.8M408.96,233.70h1.8M418.50,233.70h1.8M428.04,233.70h1.8M437.58,233.70h1.8M447.13,233.70h1.8M456.67,233.70h1.8M466.21,233.70h1.8M475.75,233.70h1.8M485.29,233.70h1.8M494.84,233.70h1.8M504.38,233.70h1.8M513.92,233.70h1.8M523.46,233.70h1.8M533.00,233.70h1.8M542.55,233.70h1.8M552.09,233.70h1.8M561.63,233.70h1.8M571.17,233.70h1.8M580.71,233.70h1.8M590.26,233.70h1.8M89.30,241.97h1.8M98.84,241.97h1.8M108.39,241.97h1.8M117.93,241.97h1.8M127.47,241.97h1.8M137.01,241.97h1.8M146.55,241.97h1.8M156.09,241.97h1.8M165.64,241.97h1.8M175.18,241.97h1.8M184.72,241.97h1.8M194.26,241.97h1.8M203.81,241.97h1.8M213.35,241.97h1.8M222.89,241.97h1.8M232.43,241.97h1.8M241.97,241.97h1.8M251.51,241.97h1.8M261.06,241.97h1.8M270.60,241.97h1.8M280.14,241.97h1.8M289.68,241.97h1.8M299.23,241.97h1.8M308.77,241.97h1.8M318.31,241.97h1.8M327.85,241.97h1.8M337.39,241.97h1.8M346.94,241.97h1.8M356.48,241.97h1.8M366.02,241.97h1.8M375.56,241.97h1.8M385.10,241.97h1.8M394.64,241.97h1.8M404.19,241.97h1.8M413.73,241.97h1.8M423.27,241.97h1.8M432.81,241.97h1.8M442.35,241.97h1.8M451.90,241.97h1.8M461.44,241.97h1.8M470.98,241.97h1.8M480.52,241.97h1.8M490.06,241.97h1.8M499.61,241.97h1.8M509.15,241.97h1.8M518.69,241.97h1.8M528.23,241.97h1.8M537.77,241.97h1.8M547.32,241.97h1.8M556.86,241.97h1.8M566.40,241.97h1.8M575.94,241.97h1.8M585.49,241.97h1.8M84.53,250.23h1.8M94.07,250.23h1.8M103.61,250.23h1.8M113.16,250.23h1.8M122.70,250.23h1.8M132.24,250.23h1.8M141.78,250.23h1.8M151.32,250.23h1.8M160.87,250.23h1.8M170.41,250.23h1.8M179.95,250.23h1.8M189.49,250.23h1.8M199.03,250.23h1.8M208.58,250.23h1.8M218.12,250.23h1.8M227.66,250.23h1.8M237.20,250.23h1.8M246.74,250.23h1.8M256.29,250.23h1.8M265.83,250.23h1.8M275.37,250.23h1.8M284.91,250.23h1.8M294.45,250.23h1.8M304.00,250.23h1.8M313.54,250.23h1.8M323.08,250.23h1.8M332.62,250.23h1.8M342.16,250.23h1.8M351.71,250.23h1.8M361.25,250.23h1.8M370.79,250.23h1.8M380.33,250.23h1.8M389.87,250.23h1.8M399.42,250.23h1.8M408.96,250.23h1.8M418.50,250.23h1.8M428.04,250.23h1.8M437.58,250.23h1.8M447.13,250.23h1.8M456.67,250.23h1.8M466.21,250.23h1.8M475.75,250.23h1.8M485.29,250.23h1.8M494.84,250.23h1.8M504.38,250.23h1.8M513.92,250.23h1.8M523.46,250.23h1.8M533.00,250.23h1.8M542.55,250.23h1.8M552.09,250.23h1.8M561.63,250.23h1.8M571.17,250.23h1.8M580.71,250.23h1.8M590.26,250.23h1.8M89.30,258.49h1.8M98.84,258.49h1.8M108.39,258.49h1.8M117.93,258.49h1.8M127.47,258.49h1.8M137.01,258.49h1.8M146.55,258.49h1.8M156.09,258.49h1.8M165.64,258.49h1.8M175.18,258.49h1.8M184.72,258.49h1.8M194.26,258.49h1.8M203.81,258.49h1.8M213.35,258.49h1.8M222.89,258.49h1.8M232.43,258.49h1.8M241.97,258.49h1.8M251.51,258.49h1.8M261.06,258.49h1.8M270.60,258.49h1.8M280.14,258.49h1.8M289.68,258.49h1.8M299.23,258.49h1.8M308.77,258.49h1.8M318.31,258.49h1.8M327.85,258.49h1.8M337.39,258.49h1.8M346.94,258.49h1.8M356.48,258.49h1.8M366.02,258.49h1.8M375.56,258.49h1.8M385.10,258.49h1.8M394.64,258.49h1.8M404.19,258.49h1.8M413.73,258.49h1.8M423.27,258.49h1.8M432.81,258.49h1.8M442.35,258.49h1.8M451.90,258.49h1.8M461.44,258.49h1.8M470.98,258.49h1.8M480.52,258.49h1.8M490.06,258.49h1.8M499.61,258.49h1.8M509.15,258.49h1.8M518.69,258.49h1.8M528.23,258.49h1.8M537.77,258.49h1.8M547.32,258.49h1.8M556.86,258.49h1.8M566.40,258.49h1.8M575.94,258.49h1.8M585.49,258.49h1.8M84.53,266.76h1.8M94.07,266.76h1.8M103.61,266.76h1.8M113.16,266.76h1.8M122.70,266.76h1.8M132.24,266.76h1.8M141.78,266.76h1.8M151.32,266.76h1.8M160.87,266.76h1.8M170.41,266.76h1.8M179.95,266.76h1.8M189.49,266.76h1.8M199.03,266.76h1.8M208.58,266.76h1.8M218.12,266.76h1.8M227.66,266.76h1.8M237.20,266.76h1.8M246.74,266.76h1.8M256.29,266.76h1.8M265.83,266.76h1.8M275.37,266.76h1.8M284.91,266.76h1.8M294.45,266.76h1.8M304.00,266.76h1.8M313.54,266.76h1.8M323.08,266.76h1.8M332.62,266.76h1.8M342.16,266.76h1.8M351.71,266.76h1.8M361.25,266.76h1.8M370.79,266.76h1.8M380.33,266.76h1.8M389.87,266.76h1.8M399.42,266.76h1.8M408.96,266.76h1.8M418.50,266.76h1.8M428.04,266.76h1.8M437.58,266.76h1.8M447.13,266.76h1.8M456.67,266.76h1.8M466.21,266.76h1.8M475.75,266.76h1.8M485.29,266.76h1.8M494.84,266.76h1.8M504.38,266.76h1.8M513.92,266.76h1.8M523.46,266.76h1.8M533.00,266.76h1.8M542.55,266.76h1.8M552.09,266.76h1.8M561.63,266.76h1.8M571.17,266.76h1.8M580.71,266.76h1.8M590.26,266.76h1.8M89.30,275.02h1.8M98.84,275.02h1.8M108.39,275.02h1.8M117.93,275.02h1.8M127.47,275.02h1.8M137.01,275.02h1.8M146.55,275.02h1.8M156.09,275.02h1.8M165.64,275.02h1.8M175.18,275.02h1.8M184.72,275.02h1.8M194.26,275.02h1.8M203.81,275.02h1.8M213.35,275.02h1.8M222.89,275.02h1.8M232.43,275.02h1.8M241.97,275.02h1.8M251.51,275.02h1.8M261.06,275.02h1.8M270.60,275.02h1.8M280.14,275.02h1.8M289.68,275.02h1.8M299.23,275.02h1.8M308.77,275.02h1.8M318.31,275.02h1.8M327.85,275.02h1.8M337.39,275.02h1.8M346.94,275.02h1.8M356.48,275.02h1.8M366.02,275.02h1.8M375.56,275.02h1.8M385.10,275.02h1.8M394.64,275.02h1.8M404.19,275.02h1.8M413.73,275.02h1.8M423.27,275.02h1.8M432.81,275.02h1.8M442.35,275.02h1.8M451.90,275.02h1.8M461.44,275.02h1.8M470.98,275.02h1.8M480.52,275.02h1.8M490.06,275.02h1.8M499.61,275.02h1.8M509.15,275.02h1.8M518.69,275.02h1.8M528.23,275.02h1.8M537.77,275.02h1.8M547.32,275.02h1.8M556.86,275.02h1.8M566.40,275.02h1.8M575.94,275.02h1.8M585.49,275.02h1.8M84.53,283.28h1.8M94.07,283.28h1.8M103.61,283.28h1.8M113.16,283.28h1.8M122.70,283.28h1.8M132.24,283.28h1.8M141.78,283.28h1.8M151.32,283.28h1.8M160.87,283.28h1.8M170.41,283.28h1.8M179.95,283.28h1.8M189.49,283.28h1.8M199.03,283.28h1.8M208.58,283.28h1.8M218.12,283.28h1.8M227.66,283.28h1.8M237.20,283.28h1.8M246.74,283.28h1.8M256.29,283.28h1.8M265.83,283.28h1.8M275.37,283.28h1.8M284.91,283.28h1.8M294.45,283.28h1.8M304.00,283.28h1.8M313.54,283.28h1.8M323.08,283.28h1.8M332.62,283.28h1.8M342.16,283.28h1.8M351.71,283.28h1.8M361.25,283.28h1.8M370.79,283.28h1.8M380.33,283.28h1.8M389.87,283.28h1.8M399.42,283.28h1.8M408.96,283.28h1.8M418.50,283.28h1.8M428.04,283.28h1.8M437.58,283.28h1.8M447.13,283.28h1.8M456.67,283.28h1.8M466.21,283.28h1.8M475.75,283.28h1.8M485.29,283.28h1.8M494.84,283.28h1.8M504.38,283.28h1.8M513.92,283.28h1.8M523.46,283.28h1.8M533.00,283.28h1.8M542.55,283.28h1.8M552.09,283.28h1.8M561.63,283.28h1.8M571.17,283.28h1.8M580.71,283.28h1.8M590.26,283.28h1.8M89.30,291.55h1.8M98.84,291.55h1.8M108.39,291.55h1.8M117.93,291.55h1.8M127.47,291.55h1.8M137.01,291.55h1.8M146.55,291.55h1.8M156.09,291.55h1.8M165.64,291.55h1.8M175.18,291.55h1.8M184.72,291.55h1.8M194.26,291.55h1.8M203.81,291.55h1.8M213.35,291.55h1.8M222.89,291.55h1.8M232.43,291.55h1.8M241.97,291.55h1.8M251.51,291.55h1.8M261.06,291.55h1.8M270.60,291.55h1.8M280.14,291.55h1.8M289.68,291.55h1.8M299.23,291.55h1.8M308.77,291.55h1.8M318.31,291.55h1.8M327.85,291.55h1.8M337.39,291.55h1.8M346.94,291.55h1.8M356.48,291.55h1.8M366.02,291.55h1.8M375.56,291.55h1.8M385.10,291.55h1.8M394.64,291.55h1.8M404.19,291.55h1.8M413.73,291.55h1.8M423.27,291.55h1.8M432.81,291.55h1.8M442.35,291.55h1.8M451.90,291.55h1.8M461.44,291.55h1.8M470.98,291.55h1.8M480.52,291.55h1.8M490.06,291.55h1.8M499.61,291.55h1.8M509.15,291.55h1.8M518.69,291.55h1.8M528.23,291.55h1.8M537.77,291.55h1.8M547.32,291.55h1.8M556.86,291.55h1.8M566.40,291.55h1.8M575.94,291.55h1.8M585.49,291.55h1.8M84.53,299.81h1.8M94.07,299.81h1.8M103.61,299.81h1.8M113.16,299.81h1.8M122.70,299.81h1.8M132.24,299.81h1.8M141.78,299.81h1.8M151.32,299.81h1.8M160.87,299.81h1.8M170.41,299.81h1.8M179.95,299.81h1.8M189.49,299.81h1.8M199.03,299.81h1.8M208.58,299.81h1.8M218.12,299.81h1.8M227.66,299.81h1.8M237.20,299.81h1.8M246.74,299.81h1.8M256.29,299.81h1.8M265.83,299.81h1.8M275.37,299.81h1.8M284.91,299.81h1.8M294.45,299.81h1.8M304.00,299.81h1.8M313.54,299.81h1.8M323.08,299.81h1.8M332.62,299.81h1.8M342.16,299.81h1.8M351.71,299.81h1.8M361.25,299.81h1.8M370.79,299.81h1.8M380.33,299.81h1.8M389.87,299.81h1.8M399.42,299.81h1.8M408.96,299.81h1.8M418.50,299.81h1.8M428.04,299.81h1.8M437.58,299.81h1.8M447.13,299.81h1.8M456.67,299.81h1.8M466.21,299.81h1.8M475.75,299.81h1.8M485.29,299.81h1.8M494.84,299.81h1.8M504.38,299.81h1.8M513.92,299.81h1.8M523.46,299.81h1.8M533.00,299.81h1.8M542.55,299.81h1.8M552.09,299.81h1.8M561.63,299.81h1.8M571.17,299.81h1.8M580.71,299.81h1.8M590.26,299.81h1.8M89.30,308.07h1.8M98.84,308.07h1.8M108.39,308.07h1.8M117.93,308.07h1.8M127.47,308.07h1.8M137.01,308.07h1.8M146.55,308.07h1.8M156.09,308.07h1.8M165.64,308.07h1.8M175.18,308.07h1.8M184.72,308.07h1.8M194.26,308.07h1.8M203.81,308.07h1.8M213.35,308.07h1.8M222.89,308.07h1.8M232.43,308.07h1.8M241.97,308.07h1.8M251.51,308.07h1.8M261.06,308.07h1.8M270.60,308.07h1.8M280.14,308.07h1.8M289.68,308.07h1.8M299.23,308.07h1.8M308.77,308.07h1.8M318.31,308.07h1.8M327.85,308.07h1.8M337.39,308.07h1.8M346.94,308.07h1.8M356.48,308.07h1.8M366.02,308.07h1.8M375.56,308.07h1.8M385.10,308.07h1.8M394.64,308.07h1.8M404.19,308.07h1.8M413.73,308.07h1.8M423.27,308.07h1.8M432.81,308.07h1.8M442.35,308.07h1.8M451.90,308.07h1.8M461.44,308.07h1.8M470.98,308.07h1.8M480.52,308.07h1.8M490.06,308.07h1.8M499.61,308.07h1.8M509.15,308.07h1.8M518.69,308.07h1.8M528.23,308.07h1.8M537.77,308.07h1.8M547.32,308.07h1.8M556.86,308.07h1.8M566.40,308.07h1.8M575.94,308.07h1.8M585.49,308.07h1.8M84.53,316.34h1.8M94.07,316.34h1.8M103.61,316.34h1.8M113.16,316.34h1.8M122.70,316.34h1.8M132.24,316.34h1.8M141.78,316.34h1.8M151.32,316.34h1.8M160.87,316.34h1.8M170.41,316.34h1.8M179.95,316.34h1.8M189.49,316.34h1.8M199.03,316.34h1.8M208.58,316.34h1.8M218.12,316.34h1.8M227.66,316.34h1.8M237.20,316.34h1.8M246.74,316.34h1.8M256.29,316.34h1.8M265.83,316.34h1.8M275.37,316.34h1.8M284.91,316.34h1.8M294.45,316.34h1.8M304.00,316.34h1.8M313.54,316.34h1.8M323.08,316.34h1.8M332.62,316.34h1.8M342.16,316.34h1.8M351.71,316.34h1.8M361.25,316.34h1.8M370.79,316.34h1.8M380.33,316.34h1.8M389.87,316.34h1.8M399.42,316.34h1.8M408.96,316.34h1.8M418.50,316.34h1.8M428.04,316.34h1.8M437.58,316.34h1.8M447.13,316.34h1.8M456.67,316.34h1.8M466.21,316.34h1.8M475.75,316.34h1.8M485.29,316.34h1.8M494.84,316.34h1.8M504.38,316.34h1.8M513.92,316.34h1.8M523.46,316.34h1.8M533.00,316.34h1.8M542.55,316.34h1.8M552.09,316.34h1.8M561.63,316.34h1.8M571.17,316.34h1.8M580.71,316.34h1.8M590.26,316.34h1.8M89.30,324.60h1.8M98.84,324.60h1.8M108.39,324.60h1.8M117.93,324.60h1.8M127.47,324.60h1.8M137.01,324.60h1.8M146.55,324.60h1.8M156.09,324.60h1.8M165.64,324.60h1.8M175.18,324.60h1.8M184.72,324.60h1.8M194.26,324.60h1.8M203.81,324.60h1.8M213.35,324.60h1.8M222.89,324.60h1.8M232.43,324.60h1.8M241.97,324.60h1.8M251.51,324.60h1.8M261.06,324.60h1.8M270.60,324.60h1.8M280.14,324.60h1.8M289.68,324.60h1.8M299.23,324.60h1.8M308.77,324.60h1.8M318.31,324.60h1.8M327.85,324.60h1.8M337.39,324.60h1.8M346.94,324.60h1.8M356.48,324.60h1.8M366.02,324.60h1.8M375.56,324.60h1.8M385.10,324.60h1.8M394.64,324.60h1.8M404.19,324.60h1.8M413.73,324.60h1.8M423.27,324.60h1.8M432.81,324.60h1.8M442.35,324.60h1.8M451.90,324.60h1.8M461.44,324.60h1.8M470.98,324.60h1.8M480.52,324.60h1.8M490.06,324.60h1.8M499.61,324.60h1.8M509.15,324.60h1.8M518.69,324.60h1.8M528.23,324.60h1.8M537.77,324.60h1.8M547.32,324.60h1.8M556.86,324.60h1.8M566.40,324.60h1.8M575.94,324.60h1.8M585.49,324.60h1.8M84.53,332.87h1.8M94.07,332.87h1.8M103.61,332.87h1.8M113.16,332.87h1.8M122.70,332.87h1.8M132.24,332.87h1.8M141.78,332.87h1.8M151.32,332.87h1.8M160.87,332.87h1.8M170.41,332.87h1.8M179.95,332.87h1.8M189.49,332.87h1.8M199.03,332.87h1.8M208.58,332.87h1.8M218.12,332.87h1.8M227.66,332.87h1.8M237.20,332.87h1.8M246.74,332.87h1.8M256.29,332.87h1.8M265.83,332.87h1.8M275.37,332.87h1.8M284.91,332.87h1.8M294.45,332.87h1.8M304.00,332.87h1.8M313.54,332.87h1.8M323.08,332.87h1.8M332.62,332.87h1.8M342.16,332.87h1.8M351.71,332.87h1.8M361.25,332.87h1.8M370.79,332.87h1.8M380.33,332.87h1.8M389.87,332.87h1.8M399.42,332.87h1.8M408.96,332.87h1.8M418.50,332.87h1.8M428.04,332.87h1.8M437.58,332.87h1.8M447.13,332.87h1.8M456.67,332.87h1.8M466.21,332.87h1.8M475.75,332.87h1.8M485.29,332.87h1.8M494.84,332.87h1.8M504.38,332.87h1.8M513.92,332.87h1.8M523.46,332.87h1.8M533.00,332.87h1.8M542.55,332.87h1.8M552.09,332.87h1.8M561.63,332.87h1.8M571.17,332.87h1.8M580.71,332.87h1.8M590.26,332.87h1.8M89.30,341.13h1.8M98.84,341.13h1.8M108.39,341.13h1.8M117.93,341.13h1.8M127.47,341.13h1.8M137.01,341.13h1.8M146.55,341.13h1.8M156.09,341.13h1.8M165.64,341.13h1.8M175.18,341.13h1.8M184.72,341.13h1.8M194.26,341.13h1.8M203.81,341.13h1.8M213.35,341.13h1.8M222.89,341.13h1.8M232.43,341.13h1.8M241.97,341.13h1.8M251.51,341.13h1.8M261.06,341.13h1.8M270.60,341.13h1.8M280.14,341.13h1.8M289.68,341.13h1.8M299.23,341.13h1.8M308.77,341.13h1.8M318.31,341.13h1.8M327.85,341.13h1.8M337.39,341.13h1.8M346.94,341.13h1.8M356.48,341.13h1.8M366.02,341.13h1.8M375.56,341.13h1.8M385.10,341.13h1.8M394.64,341.13h1.8M404.19,341.13h1.8M413.73,341.13h1.8M423.27,341.13h1.8M432.81,341.13h1.8M442.35,341.13h1.8M451.90,341.13h1.8M461.44,341.13h1.8M470.98,341.13h1.8M480.52,341.13h1.8M490.06,341.13h1.8M499.61,341.13h1.8M509.15,341.13h1.8M518.69,341.13h1.8M528.23,341.13h1.8M537.77,341.13h1.8M547.32,341.13h1.8M556.86,341.13h1.8M566.40,341.13h1.8M575.94,341.13h1.8M585.49,341.13h1.8M84.53,349.39h1.8M94.07,349.39h1.8M103.61,349.39h1.8M113.16,349.39h1.8M122.70,349.39h1.8M132.24,349.39h1.8M141.78,349.39h1.8M151.32,349.39h1.8M160.87,349.39h1.8M170.41,349.39h1.8M179.95,349.39h1.8M189.49,349.39h1.8M199.03,349.39h1.8M208.58,349.39h1.8M218.12,349.39h1.8M227.66,349.39h1.8M237.20,349.39h1.8M246.74,349.39h1.8M256.29,349.39h1.8M265.83,349.39h1.8M275.37,349.39h1.8M284.91,349.39h1.8M294.45,349.39h1.8M304.00,349.39h1.8M313.54,349.39h1.8M323.08,349.39h1.8M332.62,349.39h1.8M342.16,349.39h1.8M351.71,349.39h1.8M361.25,349.39h1.8M370.79,349.39h1.8M380.33,349.39h1.8M389.87,349.39h1.8M399.42,349.39h1.8M408.96,349.39h1.8M418.50,349.39h1.8M428.04,349.39h1.8M437.58,349.39h1.8M447.13,349.39h1.8M456.67,349.39h1.8M466.21,349.39h1.8M475.75,349.39h1.8M485.29,349.39h1.8M494.84,349.39h1.8M504.38,349.39h1.8M513.92,349.39h1.8M523.46,349.39h1.8M533.00,349.39h1.8M542.55,349.39h1.8M552.09,349.39h1.8M561.63,349.39h1.8M571.17,349.39h1.8M580.71,349.39h1.8M590.26,349.39h1.8M89.30,357.66h1.8M98.84,357.66h1.8M108.39,357.66h1.8M117.93,357.66h1.8M127.47,357.66h1.8M137.01,357.66h1.8M146.55,357.66h1.8M156.09,357.66h1.8M165.64,357.66h1.8M175.18,357.66h1.8M184.72,357.66h1.8M194.26,357.66h1.8M203.81,357.66h1.8M213.35,357.66h1.8M222.89,357.66h1.8M232.43,357.66h1.8M241.97,357.66h1.8M251.51,357.66h1.8M261.06,357.66h1.8M270.60,357.66h1.8M280.14,357.66h1.8M289.68,357.66h1.8M299.23,357.66h1.8M308.77,357.66h1.8M318.31,357.66h1.8M327.85,357.66h1.8M337.39,357.66h1.8M346.94,357.66h1.8M356.48,357.66h1.8M366.02,357.66h1.8M375.56,357.66h1.8M385.10,357.66h1.8M394.64,357.66h1.8M404.19,357.66h1.8M413.73,357.66h1.8M423.27,357.66h1.8M432.81,357.66h1.8M442.35,357.66h1.8M451.90,357.66h1.8M461.44,357.66h1.8M470.98,357.66h1.8M480.52,357.66h1.8M490.06,357.66h1.8M499.61,357.66h1.8M509.15,357.66h1.8M518.69,357.66h1.8M528.23,357.66h1.8M537.77,357.66h1.8M547.32,357.66h1.8M556.86,357.66h1.8M566.40,357.66h1.8M575.94,357.66h1.8M585.49,357.66h1.8M84.53,365.92h1.8M94.07,365.92h1.8M103.61,365.92h1.8M113.16,365.92h1.8M122.70,365.92h1.8M132.24,365.92h1.8M141.78,365.92h1.8M151.32,365.92h1.8M160.87,365.92h1.8M170.41,365.92h1.8M179.95,365.92h1.8M189.49,365.92h1.8M199.03,365.92h1.8M208.58,365.92h1.8M218.12,365.92h1.8M227.66,365.92h1.8M237.20,365.92h1.8M246.74,365.92h1.8M256.29,365.92h1.8M265.83,365.92h1.8M275.37,365.92h1.8M284.91,365.92h1.8M294.45,365.92h1.8M304.00,365.92h1.8M313.54,365.92h1.8M323.08,365.92h1.8M332.62,365.92h1.8M342.16,365.92h1.8M351.71,365.92h1.8M361.25,365.92h1.8M370.79,365.92h1.8M380.33,365.92h1.8M389.87,365.92h1.8M399.42,365.92h1.8M408.96,365.92h1.8M418.50,365.92h1.8M428.04,365.92h1.8M437.58,365.92h1.8M447.13,365.92h1.8M456.67,365.92h1.8M466.21,365.92h1.8M475.75,365.92h1.8M485.29,365.92h1.8M494.84,365.92h1.8M504.38,365.92h1.8M513.92,365.92h1.8M523.46,365.92h1.8M533.00,365.92h1.8M542.55,365.92h1.8M552.09,365.92h1.8M561.63,365.92h1.8M571.17,365.92h1.8M580.71,365.92h1.8M590.26,365.92h1.8M89.30,374.18h1.8M98.84,374.18h1.8M108.39,374.18h1.8M117.93,374.18h1.8M127.47,374.18h1.8M137.01,374.18h1.8M146.55,374.18h1.8M156.09,374.18h1.8M165.64,374.18h1.8M175.18,374.18h1.8M184.72,374.18h1.8M194.26,374.18h1.8M203.81,374.18h1.8M213.35,374.18h1.8M222.89,374.18h1.8M232.43,374.18h1.8M241.97,374.18h1.8M251.51,374.18h1.8M261.06,374.18h1.8M270.60,374.18h1.8M280.14,374.18h1.8M289.68,374.18h1.8M299.23,374.18h1.8M308.77,374.18h1.8M318.31,374.18h1.8M327.85,374.18h1.8M337.39,374.18h1.8M346.94,374.18h1.8M356.48,374.18h1.8M366.02,374.18h1.8M375.56,374.18h1.8M385.10,374.18h1.8M394.64,374.18h1.8M404.19,374.18h1.8M413.73,374.18h1.8M423.27,374.18h1.8M432.81,374.18h1.8M442.35,374.18h1.8M451.90,374.18h1.8M461.44,374.18h1.8M470.98,374.18h1.8M480.52,374.18h1.8M490.06,374.18h1.8M499.61,374.18h1.8M509.15,374.18h1.8M518.69,374.18h1.8M528.23,374.18h1.8M537.77,374.18h1.8M547.32,374.18h1.8M556.86,374.18h1.8M566.40,374.18h1.8M575.94,374.18h1.8M585.49,374.18h1.8M84.53,382.45h1.8M94.07,382.45h1.8M103.61,382.45h1.8M113.16,382.45h1.8M122.70,382.45h1.8M132.24,382.45h1.8M141.78,382.45h1.8M151.32,382.45h1.8M160.87,382.45h1.8M170.41,382.45h1.8M179.95,382.45h1.8M189.49,382.45h1.8M199.03,382.45h1.8M208.58,382.45h1.8M218.12,382.45h1.8M227.66,382.45h1.8M237.20,382.45h1.8M246.74,382.45h1.8M256.29,382.45h1.8M265.83,382.45h1.8M275.37,382.45h1.8M284.91,382.45h1.8M294.45,382.45h1.8M304.00,382.45h1.8M313.54,382.45h1.8M323.08,382.45h1.8M332.62,382.45h1.8M342.16,382.45h1.8M351.71,382.45h1.8M361.25,382.45h1.8M370.79,382.45h1.8M380.33,382.45h1.8M389.87,382.45h1.8M399.42,382.45h1.8M408.96,382.45h1.8M418.50,382.45h1.8M428.04,382.45h1.8M437.58,382.45h1.8M447.13,382.45h1.8M456.67,382.45h1.8M466.21,382.45h1.8M475.75,382.45h1.8M485.29,382.45h1.8M494.84,382.45h1.8M504.38,382.45h1.8M513.92,382.45h1.8M523.46,382.45h1.8M533.00,382.45h1.8M542.55,382.45h1.8M552.09,382.45h1.8M561.63,382.45h1.8M571.17,382.45h1.8M580.71,382.45h1.8M590.26,382.45h1.8M89.30,390.71h1.8M98.84,390.71h1.8M108.39,390.71h1.8M117.93,390.71h1.8M127.47,390.71h1.8M137.01,390.71h1.8M146.55,390.71h1.8M156.09,390.71h1.8M165.64,390.71h1.8M175.18,390.71h1.8M184.72,390.71h1.8M194.26,390.71h1.8M203.81,390.71h1.8M213.35,390.71h1.8M222.89,390.71h1.8M232.43,390.71h1.8M241.97,390.71h1.8M251.51,390.71h1.8M261.06,390.71h1.8M270.60,390.71h1.8M280.14,390.71h1.8M289.68,390.71h1.8M299.23,390.71h1.8M308.77,390.71h1.8M318.31,390.71h1.8M327.85,390.71h1.8M337.39,390.71h1.8M346.94,390.71h1.8M356.48,390.71h1.8M366.02,390.71h1.8M375.56,390.71h1.8M385.10,390.71h1.8M394.64,390.71h1.8M404.19,390.71h1.8M413.73,390.71h1.8M423.27,390.71h1.8M432.81,390.71h1.8M442.35,390.71h1.8M451.90,390.71h1.8M461.44,390.71h1.8M470.98,390.71h1.8M480.52,390.71h1.8M490.06,390.71h1.8M499.61,390.71h1.8M509.15,390.71h1.8M518.69,390.71h1.8M528.23,390.71h1.8M537.77,390.71h1.8M547.32,390.71h1.8M556.86,390.71h1.8M566.40,390.71h1.8M575.94,390.71h1.8M585.49,390.71h1.8M84.53,398.97h1.8M94.07,398.97h1.8M103.61,398.97h1.8M113.16,398.97h1.8M122.70,398.97h1.8M132.24,398.97h1.8M141.78,398.97h1.8M151.32,398.97h1.8M160.87,398.97h1.8M170.41,398.97h1.8M179.95,398.97h1.8M189.49,398.97h1.8M199.03,398.97h1.8M208.58,398.97h1.8M218.12,398.97h1.8M227.66,398.97h1.8M237.20,398.97h1.8M246.74,398.97h1.8M256.29,398.97h1.8M265.83,398.97h1.8M275.37,398.97h1.8M284.91,398.97h1.8M294.45,398.97h1.8M304.00,398.97h1.8M313.54,398.97h1.8M323.08,398.97h1.8M332.62,398.97h1.8M342.16,398.97h1.8M351.71,398.97h1.8M361.25,398.97h1.8M370.79,398.97h1.8M380.33,398.97h1.8M389.87,398.97h1.8M399.42,398.97h1.8M408.96,398.97h1.8M418.50,398.97h1.8M428.04,398.97h1.8M437.58,398.97h1.8M447.13,398.97h1.8M456.67,398.97h1.8M466.21,398.97h1.8M475.75,398.97h1.8M485.29,398.97h1.8M494.84,398.97h1.8M504.38,398.97h1.8M513.92,398.97h1.8M523.46,398.97h1.8M533.00,398.97h1.8M542.55,398.97h1.8M552.09,398.97h1.8M561.63,398.97h1.8M571.17,398.97h1.8M580.71,398.97h1.8M590.26,398.97h1.8M89.30,407.24h1.8M98.84,407.24h1.8M108.39,407.24h1.8M117.93,407.24h1.8M127.47,407.24h1.8M137.01,407.24h1.8M146.55,407.24h1.8M156.09,407.24h1.8M165.64,407.24h1.8M175.18,407.24h1.8M184.72,407.24h1.8M194.26,407.24h1.8M203.81,407.24h1.8M213.35,407.24h1.8M222.89,407.24h1.8M232.43,407.24h1.8M241.97,407.24h1.8M251.51,407.24h1.8M261.06,407.24h1.8M270.60,407.24h1.8M280.14,407.24h1.8M289.68,407.24h1.8M299.23,407.24h1.8M308.77,407.24h1.8M318.31,407.24h1.8M327.85,407.24h1.8M337.39,407.24h1.8M346.94,407.24h1.8M356.48,407.24h1.8M366.02,407.24h1.8M375.56,407.24h1.8M385.10,407.24h1.8M394.64,407.24h1.8M404.19,407.24h1.8M413.73,407.24h1.8M423.27,407.24h1.8M432.81,407.24h1.8M442.35,407.24h1.8M451.90,407.24h1.8M461.44,407.24h1.8M470.98,407.24h1.8M480.52,407.24h1.8M490.06,407.24h1.8M499.61,407.24h1.8M509.15,407.24h1.8M518.69,407.24h1.8M528.23,407.24h1.8M537.77,407.24h1.8M547.32,407.24h1.8M556.86,407.24h1.8M566.40,407.24h1.8M575.94,407.24h1.8M585.49,407.24h1.8M84.53,415.50h1.8M94.07,415.50h1.8M103.61,415.50h1.8M113.16,415.50h1.8M122.70,415.50h1.8M132.24,415.50h1.8M141.78,415.50h1.8M151.32,415.50h1.8M160.87,415.50h1.8M170.41,415.50h1.8M179.95,415.50h1.8M189.49,415.50h1.8M199.03,415.50h1.8M208.58,415.50h1.8M218.12,415.50h1.8M227.66,415.50h1.8M237.20,415.50h1.8M246.74,415.50h1.8M256.29,415.50h1.8M265.83,415.50h1.8M275.37,415.50h1.8M284.91,415.50h1.8M294.45,415.50h1.8M304.00,415.50h1.8M313.54,415.50h1.8M323.08,415.50h1.8M332.62,415.50h1.8M342.16,415.50h1.8M351.71,415.50h1.8M361.25,415.50h1.8M370.79,415.50h1.8M380.33,415.50h1.8M389.87,415.50h1.8M399.42,415.50h1.8M408.96,415.50h1.8M418.50,415.50h1.8M428.04,415.50h1.8M437.58,415.50h1.8M447.13,415.50h1.8M456.67,415.50h1.8M466.21,415.50h1.8M475.75,415.50h1.8M485.29,415.50h1.8M494.84,415.50h1.8M504.38,415.50h1.8M513.92,415.50h1.8M523.46,415.50h1.8M533.00,415.50h1.8M542.55,415.50h1.8M552.09,415.50h1.8M561.63,415.50h1.8M571.17,415.50h1.8M580.71,415.50h1.8M590.26,415.50h1.8M89.30,423.77h1.8M98.84,423.77h1.8M108.39,423.77h1.8M117.93,423.77h1.8M127.47,423.77h1.8M137.01,423.77h1.8M146.55,423.77h1.8M156.09,423.77h1.8M165.64,423.77h1.8M175.18,423.77h1.8M184.72,423.77h1.8M194.26,423.77h1.8M203.81,423.77h1.8M213.35,423.77h1.8M222.89,423.77h1.8M232.43,423.77h1.8M241.97,423.77h1.8M251.51,423.77h1.8M261.06,423.77h1.8M270.60,423.77h1.8M280.14,423.77h1.8M289.68,423.77h1.8M299.23,423.77h1.8M308.77,423.77h1.8M318.31,423.77h1.8M327.85,423.77h1.8M337.39,423.77h1.8M346.94,423.77h1.8M356.48,423.77h1.8M366.02,423.77h1.8M375.56,423.77h1.8M385.10,423.77h1.8M394.64,423.77h1.8M404.19,423.77h1.8M413.73,423.77h1.8M423.27,423.77h1.8M432.81,423.77h1.8M442.35,423.77h1.8M451.90,423.77h1.8M461.44,423.77h1.8M470.98,423.77h1.8M480.52,423.77h1.8M490.06,423.77h1.8M499.61,423.77h1.8M509.15,423.77h1.8M518.69,423.77h1.8M528.23,423.77h1.8M537.77,423.77h1.8M547.32,423.77h1.8M556.86,423.77h1.8M566.40,423.77h1.8M575.94,423.77h1.8M585.49,423.77h1.8M84.53,432.03h1.8M94.07,432.03h1.8M103.61,432.03h1.8M113.16,432.03h1.8M122.70,432.03h1.8M132.24,432.03h1.8M141.78,432.03h1.8M151.32,432.03h1.8M160.87,432.03h1.8M170.41,432.03h1.8M179.95,432.03h1.8M189.49,432.03h1.8M199.03,432.03h1.8M208.58,432.03h1.8M218.12,432.03h1.8M227.66,432.03h1.8M237.20,432.03h1.8M246.74,432.03h1.8M256.29,432.03h1.8M265.83,432.03h1.8M275.37,432.03h1.8M284.91,432.03h1.8M294.45,432.03h1.8M304.00,432.03h1.8M313.54,432.03h1.8M323.08,432.03h1.8M332.62,432.03h1.8M342.16,432.03h1.8M351.71,432.03h1.8M361.25,432.03h1.8M370.79,432.03h1.8M380.33,432.03h1.8M389.87,432.03h1.8M399.42,432.03h1.8M408.96,432.03h1.8M418.50,432.03h1.8M428.04,432.03h1.8M437.58,432.03h1.8M447.13,432.03h1.8M456.67,432.03h1.8M466.21,432.03h1.8M475.75,432.03h1.8M485.29,432.03h1.8M494.84,432.03h1.8M504.38,432.03h1.8M513.92,432.03h1.8M523.46,432.03h1.8M533.00,432.03h1.8M542.55,432.03h1.8M552.09,432.03h1.8M561.63,432.03h1.8M571.17,432.03h1.8M580.71,432.03h1.8M590.26,432.03h1.8M89.30,440.29h1.8M98.84,440.29h1.8M108.39,440.29h1.8M117.93,440.29h1.8M127.47,440.29h1.8M137.01,440.29h1.8M146.55,440.29h1.8M156.09,440.29h1.8M165.64,440.29h1.8M175.18,440.29h1.8M184.72,440.29h1.8M194.26,440.29h1.8M203.81,440.29h1.8M213.35,440.29h1.8M222.89,440.29h1.8M232.43,440.29h1.8M241.97,440.29h1.8M251.51,440.29h1.8M261.06,440.29h1.8M270.60,440.29h1.8M280.14,440.29h1.8M289.68,440.29h1.8M299.23,440.29h1.8M308.77,440.29h1.8M318.31,440.29h1.8M327.85,440.29h1.8M337.39,440.29h1.8M346.94,440.29h1.8M356.48,440.29h1.8M366.02,440.29h1.8M375.56,440.29h1.8M385.10,440.29h1.8M394.64,440.29h1.8M404.19,440.29h1.8M413.73,440.29h1.8M423.27,440.29h1.8M432.81,440.29h1.8M442.35,440.29h1.8M451.90,440.29h1.8M461.44,440.29h1.8M470.98,440.29h1.8M480.52,440.29h1.8M490.06,440.29h1.8M499.61,440.29h1.8M509.15,440.29h1.8M518.69,440.29h1.8M528.23,440.29h1.8M537.77,440.29h1.8M547.32,440.29h1.8M556.86,440.29h1.8M566.40,440.29h1.8M575.94,440.29h1.8M585.49,440.29h1.8M84.53,448.56h1.8M94.07,448.56h1.8M103.61,448.56h1.8M113.16,448.56h1.8M122.70,448.56h1.8M132.24,448.56h1.8M141.78,448.56h1.8M151.32,448.56h1.8M160.87,448.56h1.8M170.41,448.56h1.8M179.95,448.56h1.8M189.49,448.56h1.8M199.03,448.56h1.8M208.58,448.56h1.8M218.12,448.56h1.8M227.66,448.56h1.8M237.20,448.56h1.8M246.74,448.56h1.8M256.29,448.56h1.8M265.83,448.56h1.8M275.37,448.56h1.8M284.91,448.56h1.8M294.45,448.56h1.8M304.00,448.56h1.8M313.54,448.56h1.8M323.08,448.56h1.8M332.62,448.56h1.8M342.16,448.56h1.8M351.71,448.56h1.8M361.25,448.56h1.8M370.79,448.56h1.8M380.33,448.56h1.8M389.87,448.56h1.8M399.42,448.56h1.8M408.96,448.56h1.8M418.50,448.56h1.8M428.04,448.56h1.8M437.58,448.56h1.8M447.13,448.56h1.8M456.67,448.56h1.8M466.21,448.56h1.8M475.75,448.56h1.8M485.29,448.56h1.8M494.84,448.56h1.8M504.38,448.56h1.8M513.92,448.56h1.8M523.46,448.56h1.8M533.00,448.56h1.8M542.55,448.56h1.8M552.09,448.56h1.8M561.63,448.56h1.8M571.17,448.56h1.8M580.71,448.56h1.8M590.26,448.56h1.8" stroke="#d9d9d1" stroke-width="1.3" fill="none"/><path d="M213.85,208.91 L242.47,159.33 L299.72,159.33 L328.35,208.91 L299.72,258.49 L242.47,258.49 Z M223.39,208.91 L247.24,167.59 L294.95,167.59 L318.81,208.91 L294.95,250.23 L247.24,250.23 Z" fill="none" stroke="#2c2c2c" stroke-width="1.0" stroke-linejoin="miter"/><path d="M229.31,182.13 L228.56,187.82 L227.31,185.59 L224.75,185.62 Z M273.40,159.33 L268.10,161.53 L269.40,159.33 L268.10,157.13 Z M315.19,186.11 L310.63,182.62 L313.19,182.65 L314.44,180.42 Z M312.89,235.69 L313.63,230.00 L314.89,232.23 L317.44,232.20 Z M268.80,258.49 L274.10,256.29 L272.80,258.49 L274.10,260.69 Z M227.01,231.71 L231.56,235.20 L229.01,235.17 L227.75,237.40 Z M234.17,190.24 L234.91,184.55 L236.17,186.78 L238.72,186.75 Z M268.80,167.59 L274.10,165.39 L272.80,167.59 L274.10,169.79 Z M305.73,186.26 L310.29,189.75 L307.73,189.72 L306.48,191.95 Z M308.03,227.58 L307.29,233.27 L306.03,231.04 L303.48,231.07 Z M273.40,250.23 L268.10,252.43 L269.40,250.23 L268.10,248.03 Z M236.47,231.56 L231.91,228.07 L234.47,228.10 L235.72,225.87 Z" fill="#1a1a1a" stroke="none"/><path d="M213.85,208.91 L213.55,209.43 L213.25,209.93 L212.95,210.41 L212.65,210.85 L212.36,211.24 L212.06,211.58 L211.76,211.85 L211.46,212.05 L211.16,212.17 L210.86,212.21 L210.57,212.17 L210.27,212.05 L209.97,211.85 L209.67,211.58 L209.37,211.24 L209.08,210.85 L208.78,210.41 L208.48,209.93 L208.18,209.43 L207.88,208.91 L207.58,208.40 L207.29,207.89 L206.99,207.41 L206.69,206.97 L206.39,206.58 L206.09,206.24 L205.79,205.97 L205.50,205.77 L205.20,205.65 L204.90,205.61 L204.60,205.65 L204.30,205.77 L204.01,205.97 L203.71,206.24 L203.41,206.58 L203.11,206.97 L202.81,207.41 L202.51,207.89 L202.22,208.40 L201.92,208.91 L201.62,209.43 L201.32,209.93 L201.02,210.41 L200.73,210.85 L200.43,211.24 L200.13,211.58 L199.83,211.85 L199.53,212.05 L199.23,212.17 L198.94,212.21 L198.64,212.17 L198.34,212.05 L198.04,211.85 L197.74,211.58 L197.45,211.24 L197.15,210.85 L196.85,210.41 L196.55,209.93 L196.25,209.43 L195.95,208.91 L195.66,208.40 L195.36,207.89 L195.06,207.41 L194.76,206.97 L194.46,206.58 L194.17,206.24 L193.87,205.97 L193.57,205.77 L193.27,205.65 L192.97,205.61 L192.67,205.65 L192.38,205.77 L192.08,205.97 L191.78,206.24 L191.48,206.58 L191.18,206.97 L190.89,207.41 L190.59,207.89 L190.29,208.40 L189.99,208.91 L189.69,209.43 L189.39,209.93 L189.10,210.41 L188.80,210.85 L188.50,211.24 L188.20,211.58 L187.90,211.85 L187.61,212.05 L187.31,212.17 L187.01,212.21 L186.71,212.17 L186.41,212.05 L186.11,211.85 L185.82,211.58 L185.52,211.24 L185.22,210.85 L184.92,210.41 L184.62,209.93 L184.33,209.43 L184.03,208.91 L183.73,208.40 L183.43,207.89 L183.13,207.41 L182.83,206.97 L182.54,206.58 L182.24,206.24 L181.94,205.97 L181.64,205.77 L181.34,205.65 L181.05,205.61 L180.75,205.65 L180.45,205.77 L180.15,205.97 L179.85,206.24 L179.55,206.58 L179.26,206.97 L178.96,207.41 L178.66,207.89 L178.36,208.40 L178.06,208.91 L177.77,209.43 L177.47,209.93 L177.17,210.41 L176.87,210.85 L176.57,211.24 L176.27,211.58 L175.98,211.85 L175.68,212.05 L175.38,212.17 L175.08,212.21 L174.78,212.17 L174.49,212.05 L174.19,211.85 L173.89,211.58 L173.59,211.24 L173.29,210.85 L172.99,210.41 L172.70,209.93 L172.40,209.43 L172.10,208.91 L171.80,208.40 L171.50,207.89 L171.21,207.41 L170.91,206.97 L170.61,206.58 L170.31,206.24 L170.01,205.97 L169.71,205.77 L169.42,205.65 L169.12,205.61 L168.82,205.65 L168.52,205.77 L168.22,205.97 L167.93,206.24 L167.63,206.58 L167.33,206.97 L167.03,207.41 L166.73,207.89 L166.43,208.40 L166.14,208.91 M242.47,159.33 L241.88,159.33 L241.29,159.32 L240.73,159.30 L240.20,159.27 L239.71,159.21 L239.27,159.12 L238.88,158.99 L238.56,158.83 L238.31,158.64 L238.12,158.40 L238.01,158.12 L237.96,157.80 L237.99,157.44 L238.07,157.05 L238.21,156.62 L238.41,156.17 L238.64,155.69 L238.91,155.19 L239.19,154.68 L239.49,154.16 L239.79,153.65 L240.08,153.14 L240.34,152.64 L240.57,152.16 L240.77,151.71 L240.91,151.28 L240.99,150.89 L241.02,150.53 L240.97,150.21 L240.86,149.93 L240.67,149.69 L240.42,149.50 L240.10,149.34 L239.71,149.21 L239.27,149.12 L238.78,149.06 L238.25,149.03 L237.69,149.01 L237.10,149.00 L236.51,149.00 L235.91,149.00 L235.33,148.99 L234.76,148.97 L234.23,148.94 L233.74,148.88 L233.30,148.79 L232.92,148.66 L232.60,148.50 L232.34,148.31 L232.16,148.07 L232.05,147.79 L232.00,147.47 L232.02,147.11 L232.11,146.72 L232.25,146.29 L232.44,145.84 L232.68,145.36 L232.94,144.86 L233.23,144.35 L233.53,143.84 L233.82,143.32 L234.11,142.81 L234.38,142.31 L234.61,141.83 L234.80,141.38 L234.94,140.95 L235.03,140.56 L235.05,140.20 L235.01,139.88 L234.89,139.60 L234.71,139.37 L234.46,139.17 L234.13,139.01 L233.75,138.89 L233.31,138.80 L232.82,138.73 L232.29,138.70 L231.73,138.68 L231.14,138.67 L230.54,138.67 L229.95,138.67 L229.36,138.66 L228.80,138.65 L228.27,138.61 L227.78,138.55 L227.34,138.46 L226.95,138.33 L226.63,138.17 L226.38,137.98 L226.20,137.74 L226.08,137.46 L226.04,137.14 L226.06,136.78 L226.15,136.39 L226.29,135.96 L226.48,135.51 L226.71,135.03 L226.98,134.53 L227.26,134.02 L227.56,133.51 L227.86,132.99 L228.15,132.48 L228.41,131.98 L228.65,131.50 L228.84,131.05 L228.98,130.62 L229.07,130.23 L229.09,129.87 L229.04,129.55 L228.93,129.27 L228.75,129.04 L228.49,128.84 L228.17,128.68 L227.79,128.56 L227.35,128.47 L226.86,128.40 L226.33,128.37 L225.76,128.35 L225.18,128.34 L224.58,128.34 L223.98,128.34 L223.40,128.33 L222.84,128.32 L222.30,128.28 L221.81,128.22 L221.37,128.13 L220.99,128.00 L220.67,127.84 L220.42,127.65 L220.23,127.41 L220.12,127.13 L220.07,126.81 L220.10,126.45 L220.18,126.06 L220.32,125.63 L220.52,125.18 L220.75,124.70 L221.01,124.20 L221.30,123.69 L221.60,123.18 L221.90,122.66 L222.18,122.15 L222.45,121.65 L222.68,121.17 L222.87,120.72 L223.02,120.29 L223.10,119.90 L223.12,119.54 L223.08,119.22 L222.97,118.94 L222.78,118.71 L222.53,118.51 L222.21,118.35 L221.82,118.23 L221.38,118.14 L220.89,118.07 L220.36,118.04 L219.80,118.02 L219.21,118.01 L218.62,118.01 M299.72,159.33 L299.43,158.81 L299.14,158.30 L298.87,157.81 L298.64,157.33 L298.45,156.87 L298.31,156.45 L298.22,156.05 L298.20,155.69 L298.24,155.38 L298.36,155.10 L298.54,154.86 L298.80,154.66 L299.12,154.50 L299.50,154.38 L299.94,154.29 L300.43,154.23 L300.96,154.19 L301.52,154.17 L302.11,154.17 L302.71,154.16 L303.30,154.16 L303.89,154.16 L304.45,154.14 L304.98,154.10 L305.47,154.04 L305.91,153.95 L306.30,153.83 L306.62,153.67 L306.87,153.47 L307.05,153.23 L307.17,152.95 L307.21,152.64 L307.19,152.28 L307.11,151.88 L306.96,151.46 L306.77,151.00 L306.54,150.52 L306.27,150.03 L305.99,149.52 L305.69,149.00 L305.39,148.48 L305.10,147.97 L304.84,147.48 L304.60,147.00 L304.41,146.54 L304.27,146.12 L304.19,145.72 L304.16,145.37 L304.21,145.05 L304.32,144.77 L304.51,144.53 L304.76,144.33 L305.08,144.17 L305.46,144.05 L305.90,143.96 L306.39,143.90 L306.92,143.86 L307.49,143.84 L308.07,143.84 L308.67,143.84 L309.27,143.84 L309.85,143.83 L310.41,143.81 L310.95,143.77 L311.44,143.71 L311.88,143.62 L312.26,143.50 L312.58,143.34 L312.83,143.14 L313.02,142.90 L313.13,142.62 L313.18,142.31 L313.15,141.95 L313.07,141.56 L312.93,141.13 L312.73,140.67 L312.50,140.19 L312.24,139.70 L311.95,139.19 L311.65,138.67 L311.35,138.15 L311.07,137.64 L310.80,137.15 L310.57,136.67 L310.38,136.21 L310.23,135.79 L310.15,135.39 L310.13,135.04 L310.17,134.72 L310.28,134.44 L310.47,134.20 L310.72,134.00 L311.04,133.84 L311.43,133.72 L311.87,133.63 L312.36,133.57 L312.89,133.53 L313.45,133.51 L314.04,133.51 L314.63,133.51 L315.23,133.51 L315.81,133.50 L316.38,133.48 L316.91,133.44 L317.40,133.38 L317.84,133.29 L318.22,133.17 L318.54,133.01 L318.80,132.81 L318.98,132.57 L319.10,132.30 L319.14,131.98 L319.12,131.62 L319.03,131.23 L318.89,130.80 L318.70,130.34 L318.47,129.87 L318.20,129.37 L317.91,128.86 L317.62,128.34 L317.32,127.82 L317.03,127.31 L316.77,126.82 L316.53,126.34 L316.34,125.88 L316.20,125.46 L316.11,125.06 L316.09,124.71 L316.13,124.39 L316.25,124.11 L316.43,123.87 L316.69,123.67 L317.01,123.51 L317.39,123.39 L317.83,123.30 L318.32,123.24 L318.85,123.20 L319.42,123.18 L320.00,123.18 L320.60,123.18 L321.19,123.18 L321.78,123.17 L322.34,123.15 L322.87,123.11 L323.36,123.05 L323.80,122.96 L324.19,122.84 L324.51,122.68 L324.76,122.48 L324.95,122.24 L325.06,121.97 L325.10,121.65 L325.08,121.29 L325.00,120.90 L324.85,120.47 L324.66,120.01 L324.43,119.54 L324.16,119.04 L323.88,118.53 L323.58,118.01 M328.35,208.91 L328.65,208.40 L328.95,207.89 L329.24,207.41 L329.54,206.97 L329.84,206.58 L330.14,206.24 L330.44,205.97 L330.74,205.77 L331.03,205.65 L331.33,205.61 L331.63,205.65 L331.93,205.77 L332.23,205.97 L332.52,206.24 L332.82,206.58 L333.12,206.97 L333.42,207.41 L333.72,207.89 L334.02,208.40 L334.31,208.91 L334.61,209.43 L334.91,209.93 L335.21,210.41 L335.51,210.85 L335.80,211.24 L336.10,211.58 L336.40,211.85 L336.70,212.05 L337.00,212.17 L337.30,212.21 L337.59,212.17 L337.89,212.05 L338.19,211.85 L338.49,211.58 L338.79,211.24 L339.08,210.85 L339.38,210.41 L339.68,209.93 L339.98,209.43 L340.28,208.91 L340.58,208.40 L340.87,207.89 L341.17,207.41 L341.47,206.97 L341.77,206.58 L342.07,206.24 L342.36,205.97 L342.66,205.77 L342.96,205.65 L343.26,205.61 L343.56,205.65 L343.86,205.77 L344.15,205.97 L344.45,206.24 L344.75,206.58 L345.05,206.97 L345.35,207.41 L345.64,207.89 L345.94,208.40 L346.24,208.91 L346.54,209.43 L346.84,209.93 L347.14,210.41 L347.43,210.85 L347.73,211.24 L348.03,211.58 L348.33,211.85 L348.63,212.05 L348.92,212.17 L349.22,212.21 L349.52,212.17 L349.82,212.05 L350.12,211.85 L350.42,211.58 L350.71,211.24 L351.01,210.85 L351.31,210.41 L351.61,209.93 L351.91,209.43 L352.21,208.91 L352.50,208.40 L352.80,207.89 L353.10,207.41 L353.40,206.97 L353.70,206.58 L353.99,206.24 L354.29,205.97 L354.59,205.77 L354.89,205.65 L355.19,205.61 L355.49,205.65 L355.78,205.77 L356.08,205.97 L356.38,206.24 L356.68,206.58 L356.98,206.97 L357.27,207.41 L357.57,207.89 L357.87,208.40 L358.17,208.91 L358.47,209.43 L358.77,209.93 L359.06,210.41 L359.36,210.85 L359.66,211.24 L359.96,211.58 L360.26,211.85 L360.55,212.05 L360.85,212.17 L361.15,212.21 L361.45,212.17 L361.75,212.05 L362.05,211.85 L362.34,211.58 L362.64,211.24 L362.94,210.85 L363.24,210.41 L363.54,209.93 L363.83,209.43 L364.13,208.91 L364.43,208.40 L364.73,207.89 L365.03,207.41 L365.33,206.97 L365.62,206.58 L365.92,206.24 L366.22,205.97 L366.52,205.77 L366.82,205.65 L367.11,205.61 L367.41,205.65 L367.71,205.77 L368.01,205.97 L368.31,206.24 L368.61,206.58 L368.90,206.97 L369.20,207.41 L369.50,207.89 L369.80,208.40 L370.10,208.91 L370.39,209.43 L370.69,209.93 L370.99,210.41 L371.29,210.85 L371.59,211.24 L371.89,211.58 L372.18,211.85 L372.48,212.05 L372.78,212.17 L373.08,212.21 L373.38,212.17 L373.67,212.05 L373.97,211.85 L374.27,211.58 L374.57,211.24 L374.87,210.85 L375.17,210.41 L375.46,209.93 L375.76,209.43 L376.06,208.91 M299.72,258.49 L300.32,258.49 L300.91,258.50 L301.47,258.52 L302.00,258.56 L302.49,258.62 L302.93,258.71 L303.31,258.83 L303.63,258.99 L303.89,259.19 L304.07,259.43 L304.19,259.70 L304.23,260.02 L304.21,260.38 L304.12,260.77 L303.98,261.20 L303.79,261.66 L303.56,262.13 L303.29,262.63 L303.00,263.14 L302.71,263.66 L302.41,264.17 L302.12,264.68 L301.86,265.18 L301.62,265.66 L301.43,266.12 L301.29,266.54 L301.20,266.94 L301.18,267.29 L301.23,267.61 L301.34,267.89 L301.52,268.13 L301.78,268.33 L302.10,268.49 L302.48,268.61 L302.92,268.70 L303.41,268.76 L303.94,268.80 L304.51,268.82 L305.09,268.82 L305.69,268.82 L306.28,268.82 L306.87,268.83 L307.43,268.85 L307.96,268.89 L308.45,268.95 L308.89,269.04 L309.28,269.16 L309.60,269.32 L309.85,269.52 L310.04,269.76 L310.15,270.03 L310.19,270.35 L310.17,270.71 L310.09,271.10 L309.94,271.53 L309.75,271.98 L309.52,272.46 L309.25,272.96 L308.97,273.47 L308.67,273.99 L308.37,274.50 L308.08,275.01 L307.82,275.51 L307.59,275.99 L307.39,276.45 L307.25,276.87 L307.17,277.27 L307.14,277.62 L307.19,277.94 L307.30,278.22 L307.49,278.46 L307.74,278.66 L308.06,278.81 L308.44,278.94 L308.89,279.03 L309.38,279.09 L309.91,279.13 L310.47,279.15 L311.06,279.15 L311.65,279.15 L312.25,279.15 L312.83,279.16 L313.40,279.18 L313.93,279.22 L314.42,279.28 L314.86,279.37 L315.24,279.49 L315.56,279.65 L315.82,279.85 L316.00,280.08 L316.11,280.36 L316.16,280.68 L316.14,281.04 L316.05,281.43 L315.91,281.86 L315.72,282.31 L315.48,282.79 L315.22,283.29 L314.93,283.80 L314.63,284.32 L314.34,284.83 L314.05,285.34 L313.78,285.84 L313.55,286.32 L313.36,286.77 L313.22,287.20 L313.13,287.59 L313.11,287.95 L313.15,288.27 L313.27,288.55 L313.45,288.79 L313.70,288.99 L314.03,289.14 L314.41,289.27 L314.85,289.36 L315.34,289.42 L315.87,289.46 L316.43,289.48 L317.02,289.48 L317.62,289.48 L318.21,289.48 L318.80,289.49 L319.36,289.51 L319.89,289.54 L320.38,289.61 L320.82,289.70 L321.21,289.82 L321.53,289.98 L321.78,290.18 L321.96,290.41 L322.08,290.69 L322.12,291.01 L322.10,291.37 L322.01,291.76 L321.87,292.19 L321.68,292.64 L321.45,293.12 L321.18,293.62 L320.90,294.13 L320.60,294.65 L320.30,295.16 L320.01,295.67 L319.75,296.17 L319.51,296.65 L319.32,297.10 L319.18,297.53 L319.09,297.92 L319.07,298.28 L319.12,298.60 L319.23,298.88 L319.41,299.12 L319.67,299.31 L319.99,299.47 L320.37,299.60 L320.81,299.69 L321.30,299.75 L321.83,299.79 L322.40,299.80 L322.98,299.81 L323.58,299.81 M242.47,258.49 L242.77,259.01 L243.06,259.52 L243.32,260.02 L243.56,260.50 L243.75,260.95 L243.89,261.38 L243.97,261.77 L244.00,262.13 L243.95,262.45 L243.84,262.73 L243.65,262.96 L243.40,263.16 L243.08,263.32 L242.70,263.44 L242.26,263.53 L241.77,263.59 L241.23,263.63 L240.67,263.65 L240.09,263.66 L239.49,263.66 L238.89,263.66 L238.31,263.66 L237.75,263.68 L237.21,263.72 L236.72,263.78 L236.28,263.87 L235.90,264.00 L235.58,264.15 L235.33,264.35 L235.14,264.59 L235.03,264.87 L234.98,265.19 L235.01,265.54 L235.09,265.94 L235.23,266.36 L235.42,266.82 L235.66,267.30 L235.92,267.80 L236.21,268.31 L236.51,268.82 L236.81,269.34 L237.09,269.85 L237.36,270.35 L237.59,270.83 L237.78,271.28 L237.93,271.71 L238.01,272.10 L238.03,272.46 L237.99,272.78 L237.88,273.06 L237.69,273.29 L237.44,273.49 L237.12,273.65 L236.73,273.77 L236.29,273.86 L235.80,273.92 L235.27,273.96 L234.71,273.98 L234.12,273.99 L233.53,273.99 L232.93,273.99 L232.35,273.99 L231.78,274.01 L231.25,274.05 L230.76,274.11 L230.32,274.20 L229.94,274.32 L229.62,274.48 L229.36,274.68 L229.18,274.92 L229.06,275.20 L229.02,275.52 L229.04,275.87 L229.13,276.27 L229.27,276.69 L229.46,277.15 L229.69,277.63 L229.96,278.13 L230.25,278.64 L230.54,279.15 L230.84,279.67 L231.13,280.18 L231.39,280.68 L231.63,281.15 L231.82,281.61 L231.96,282.04 L232.05,282.43 L232.07,282.79 L232.03,283.11 L231.91,283.38 L231.73,283.62 L231.47,283.82 L231.15,283.98 L230.77,284.10 L230.33,284.19 L229.84,284.25 L229.31,284.29 L228.74,284.31 L228.16,284.32 L227.56,284.32 L226.97,284.32 L226.38,284.32 L225.82,284.34 L225.29,284.38 L224.80,284.44 L224.36,284.53 L223.97,284.65 L223.65,284.81 L223.40,285.01 L223.21,285.25 L223.10,285.53 L223.06,285.85 L223.08,286.20 L223.16,286.60 L223.31,287.02 L223.50,287.48 L223.73,287.96 L224.00,288.46 L224.28,288.97 L224.58,289.48 L224.88,290.00 L225.17,290.51 L225.43,291.01 L225.66,291.48 L225.86,291.94 L226.00,292.37 L226.08,292.76 L226.11,293.12 L226.06,293.44 L225.95,293.71 L225.76,293.95 L225.51,294.15 L225.19,294.31 L224.81,294.43 L224.37,294.52 L223.88,294.58 L223.34,294.62 L222.78,294.64 L222.20,294.65 L221.60,294.65 L221.00,294.65 L220.42,294.65 L219.85,294.67 L219.32,294.71 L218.83,294.77 L218.39,294.86 L218.01,294.98 L217.69,295.14 L217.43,295.34 L217.25,295.58 L217.14,295.86 L217.09,296.18 L217.11,296.53 L217.20,296.93 L217.34,297.35 L217.53,297.81 L217.77,298.29 L218.03,298.78 L218.32,299.29 L218.62,299.81" fill="none" stroke="#2c2c2c" stroke-width="1.0"/><rect x="3.50" y="53.00" width="0.90" height="398.00" fill="#b8b8b8" /><rect x="4.40" y="53.00" width="0.80" height="398.00" fill="#e6e6e6" /><rect x="4.50" y="58.40" width="77.00" height="0.80" fill="#e2e2e2" /><rect x="5.30" y="58.80" width="25.43" height="25.60" fill="#a6a7b4" /><rect x="5.30" y="58.80" width="25.43" height="1.60" fill="#74747a" /><rect x="5.30" y="58.80" width="1.60" height="25.60" fill="#74747a" /><rect x="5.30" y="83.20" width="25.43" height="1.20" fill="#fafafa" /><rect x="29.53" y="58.80" width="1.20" height="25.60" fill="#fafafa" /><path d="M9.10,81.00 L26.90,63.30" fill="none" stroke="#141414" stroke-width="1.25"/><path d="M19.98,70.17 L17.65,75.76 L16.91,73.24 L14.39,72.50 Z" fill="#111"/><rect x="30.73" y="58.80" width="25.43" height="25.60" fill="#cecece" /><rect x="30.73" y="58.80" width="25.43" height="1.30" fill="#f8f8f8" /><rect x="30.73" y="58.80" width="1.30" height="25.60" fill="#f8f8f8" /><rect x="30.73" y="82.80" width="25.43" height="1.60" fill="#7c7c7c" /><rect x="54.56" y="58.80" width="1.60" height="25.60" fill="#7c7c7c" /><circle cx="43.73" cy="71.90" r="8.6" fill="none" stroke="#141414" stroke-width="1.25"/><path d="M35.13,75.00 L32.83,69.40 L35.13,70.66 L37.43,69.40 Z" fill="#111"/><rect x="56.16" y="58.80" width="25.43" height="25.60" fill="#cecece" /><rect x="56.16" y="58.80" width="25.43" height="1.30" fill="#f8f8f8" /><rect x="56.16" y="58.80" width="1.30" height="25.60" fill="#f8f8f8" /><rect x="56.16" y="82.80" width="25.43" height="1.60" fill="#7c7c7c" /><rect x="79.99" y="58.80" width="1.60" height="25.60" fill="#7c7c7c" /><path d="M60.07,69.30 L60.50,68.72 L60.98,68.19 L61.51,67.70 L62.07,67.25 L62.66,66.84 L63.28,66.49 L63.94,66.18 L64.61,65.94 L65.30,65.74 L66.01,65.60 L66.72,65.52 L67.44,65.50 L68.16,65.54 L68.87,65.63 L69.57,65.78 L70.26,65.98 L70.93,66.25 L71.57,66.56 L72.19,66.93 L72.78,67.34 L73.33,67.80 L73.84,68.30 L74.31,68.84 L74.74,69.42 L75.12,70.03 L75.44,70.67 L75.72,71.34 L75.94,72.02 L76.10,72.72 L76.21,73.43 L76.26,74.15 L76.25,74.87 L76.18,75.58 L76.06,76.29 L75.88,76.98 L75.64,77.66 L75.35,78.32 L75.01,78.95 L74.62,79.55 L74.18,80.12" fill="none" stroke="#141414" stroke-width="1.25"/><path d="M75.56,69.94 L69.93,67.71 L72.43,66.93 L73.13,64.40 Z" fill="#111"/><rect x="5.30" y="84.40" width="25.43" height="25.60" fill="#cecece" /><rect x="5.30" y="84.40" width="25.43" height="1.30" fill="#f8f8f8" /><rect x="5.30" y="84.40" width="1.30" height="25.60" fill="#f8f8f8" /><rect x="5.30" y="108.40" width="25.43" height="1.60" fill="#7c7c7c" /><rect x="29.13" y="84.40" width="1.60" height="25.60" fill="#7c7c7c" /><path d="M9.10,106.60 L26.90,88.90" fill="none" stroke="#141414" stroke-width="1.2" stroke-dasharray="2.9,3.9"/><path d="M19.98,95.77 L17.65,101.36 L16.91,98.84 L14.39,98.10 Z" fill="#111"/><rect x="30.73" y="84.40" width="25.43" height="25.60" fill="#cecece" /><rect x="30.73" y="84.40" width="25.43" height="1.30" fill="#f8f8f8" /><rect x="30.73" y="84.40" width="1.30" height="25.60" fill="#f8f8f8" /><rect x="30.73" y="108.40" width="25.43" height="1.60" fill="#7c7c7c" /><rect x="54.56" y="84.40" width="1.60" height="25.60" fill="#7c7c7c" /><circle cx="43.73" cy="97.50" r="8.6" fill="none" stroke="#141414" stroke-width="1.2" stroke-dasharray="2.9,3.9"/><path d="M35.13,100.60 L32.83,95.00 L35.13,96.26 L37.43,95.00 Z" fill="#111"/><rect x="56.16" y="84.40" width="25.43" height="25.60" fill="#cecece" /><rect x="56.16" y="84.40" width="25.43" height="1.30" fill="#f8f8f8" /><rect x="56.16" y="84.40" width="1.30" height="25.60" fill="#f8f8f8" /><rect x="56.16" y="108.40" width="25.43" height="1.60" fill="#7c7c7c" /><rect x="79.99" y="84.40" width="1.60" height="25.60" fill="#7c7c7c" /><path d="M60.07,94.90 L60.50,94.32 L60.98,93.79 L61.51,93.30 L62.07,92.85 L62.66,92.44 L63.28,92.09 L63.94,91.78 L64.61,91.54 L65.30,91.34 L66.01,91.20 L66.72,91.12 L67.44,91.10 L68.16,91.14 L68.87,91.23 L69.57,91.38 L70.26,91.58 L70.93,91.85 L71.57,92.16 L72.19,92.53 L72.78,92.94 L73.33,93.40 L73.84,93.90 L74.31,94.44 L74.74,95.02 L75.12,95.63 L75.44,96.27 L75.72,96.94 L75.94,97.62 L76.10,98.32 L76.21,99.03 L76.26,99.75 L76.25,100.47 L76.18,101.18 L76.06,101.89 L75.88,102.58 L75.64,103.26 L75.35,103.92 L75.01,104.55 L74.62,105.15 L74.18,105.72" fill="none" stroke="#141414" stroke-width="1.2" stroke-dasharray="2.9,3.9"/><path d="M75.56,95.54 L69.93,93.31 L72.43,92.53 L73.13,90.00 Z" fill="#111"/><rect x="5.30" y="110.00" width="25.43" height="25.60" fill="#cecece" /><rect x="5.30" y="110.00" width="25.43" height="1.30" fill="#f8f8f8" /><rect x="5.30" y="110.00" width="1.30" height="25.60" fill="#f8f8f8" /><rect x="5.30" y="134.00" width="25.43" height="1.60" fill="#7c7c7c" /><rect x="29.13" y="110.00" width="1.60" height="25.60" fill="#7c7c7c" /><path d="M9.10,132.20 L26.90,114.50" fill="none" stroke="#282828" stroke-width="1.1" stroke-dasharray="1.0,0.6"/><path d="M19.98,121.37 L17.65,126.96 L16.91,124.44 L14.39,123.70 Z" fill="#111"/><rect x="30.73" y="110.00" width="25.43" height="25.60" fill="#cecece" /><rect x="30.73" y="110.00" width="25.43" height="1.30" fill="#f8f8f8" /><rect x="30.73" y="110.00" width="1.30" height="25.60" fill="#f8f8f8" /><rect x="30.73" y="134.00" width="25.43" height="1.60" fill="#7c7c7c" /><rect x="54.56" y="110.00" width="1.60" height="25.60" fill="#7c7c7c" /><circle cx="43.73" cy="123.10" r="8.6" fill="none" stroke="#282828" stroke-width="1.1" stroke-dasharray="1.0,0.6"/><path d="M35.13,126.20 L32.83,120.60 L35.13,121.86 L37.43,120.60 Z" fill="#111"/><rect x="56.16" y="110.00" width="25.43" height="25.60" fill="#cecece" /><rect x="56.16" y="110.00" width="25.43" height="1.30" fill="#f8f8f8" /><rect x="56.16" y="110.00" width="1.30" height="25.60" fill="#f8f8f8" /><rect x="56.16" y="134.00" width="25.43" height="1.60" fill="#7c7c7c" /><rect x="79.99" y="110.00" width="1.60" height="25.60" fill="#7c7c7c" /><path d="M60.07,120.50 L60.50,119.92 L60.98,119.39 L61.51,118.90 L62.07,118.45 L62.66,118.04 L63.28,117.69 L63.94,117.38 L64.61,117.14 L65.30,116.94 L66.01,116.80 L66.72,116.72 L67.44,116.70 L68.16,116.74 L68.87,116.83 L69.57,116.98 L70.26,117.18 L70.93,117.45 L71.57,117.76 L72.19,118.13 L72.78,118.54 L73.33,119.00 L73.84,119.50 L74.31,120.04 L74.74,120.62 L75.12,121.23 L75.44,121.87 L75.72,122.54 L75.94,123.22 L76.10,123.92 L76.21,124.63 L76.26,125.35 L76.25,126.07 L76.18,126.78 L76.06,127.49 L75.88,128.18 L75.64,128.86 L75.35,129.52 L75.01,130.15 L74.62,130.75 L74.18,131.32" fill="none" stroke="#282828" stroke-width="1.1" stroke-dasharray="1.0,0.6"/><path d="M75.56,121.14 L69.93,118.91 L72.43,118.13 L73.13,115.60 Z" fill="#111"/><rect x="5.30" y="135.60" width="25.43" height="25.60" fill="#cecece" /><rect x="5.30" y="135.60" width="25.43" height="1.30" fill="#f8f8f8" /><rect x="5.30" y="135.60" width="1.30" height="25.60" fill="#f8f8f8" /><rect x="5.30" y="159.60" width="25.43" height="1.60" fill="#7c7c7c" /><rect x="29.13" y="135.60" width="1.60" height="25.60" fill="#7c7c7c" /><path d="M8.90,155.70 L8.80,155.25 L8.70,154.81 L8.63,154.39 L8.57,154.00 L8.55,153.66 L8.57,153.36 L8.63,153.11 L8.73,152.93 L8.89,152.80 L9.08,152.74 L9.33,152.73 L9.62,152.78 L9.94,152.88 L10.30,153.02 L10.68,153.19 L11.09,153.39 L11.50,153.60 L11.91,153.81 L12.32,154.01 L12.71,154.19 L13.07,154.34 L13.41,154.45 L13.71,154.51 L13.96,154.53 L14.18,154.48 L14.34,154.37 L14.46,154.20 L14.53,153.97 L14.56,153.69 L14.55,153.36 L14.51,152.98 L14.44,152.57 L14.35,152.14 L14.24,151.69 L14.14,151.23 L14.04,150.79 L13.96,150.36 L13.90,149.97 L13.87,149.61 L13.88,149.30 L13.92,149.04 L14.01,148.83 L14.15,148.69 L14.34,148.61 L14.57,148.59 L14.84,148.62 L15.16,148.71 L15.51,148.83 L15.89,149.00 L16.28,149.19 L16.69,149.40 L17.11,149.61 L17.52,149.81 L17.91,150.00 L18.29,150.16 L18.63,150.28 L18.94,150.36 L19.21,150.39 L19.44,150.35 L19.61,150.26 L19.75,150.11 L19.83,149.90 L19.87,149.63 L19.87,149.31 L19.84,148.95 L19.77,148.55 L19.69,148.12 L19.59,147.67 L19.48,147.22 L19.38,146.77 L19.30,146.34 L19.23,145.93 L19.19,145.56 L19.18,145.24 L19.22,144.96 L19.30,144.74 L19.42,144.58 L19.59,144.48 L19.81,144.44 L20.08,144.46 L20.38,144.53 L20.72,144.65 L21.09,144.81 L21.48,144.99 L21.89,145.19 L22.30,145.40 L22.72,145.61 L23.12,145.80 L23.50,145.97 L23.85,146.11 L24.17,146.20 L24.45,146.24 L24.69,146.23 L24.88,146.15 L25.03,146.02 L25.12,145.83 L25.18,145.57 L25.19,145.27 L25.16,144.92 L25.11,144.52 L25.03,144.10 L24.93,143.66 L24.83,143.21 L24.73,142.76 L24.63,142.32 L24.56,141.90 L24.51,141.52 L24.50,141.18 L24.52,140.89 L24.58,140.66 L24.70,140.48 L24.85,140.36 L25.06,140.31 L25.31,140.31 L25.60,140.37 L25.93,140.47 L26.30,140.61 L26.68,140.79 L27.09,140.99 L27.50,141.20" stroke="#141414" stroke-width="1.1" fill="none"/><rect x="30.73" y="135.60" width="25.43" height="25.60" fill="#cecece" /><rect x="30.73" y="135.60" width="25.43" height="1.30" fill="#f8f8f8" /><rect x="30.73" y="135.60" width="1.30" height="25.60" fill="#f8f8f8" /><rect x="30.73" y="159.60" width="25.43" height="1.60" fill="#7c7c7c" /><rect x="54.56" y="135.60" width="1.60" height="25.60" fill="#7c7c7c" /><path d="M50.89,149.10 L50.20,149.36 L49.52,149.56 L48.92,149.73 L48.47,149.87 L48.19,150.01 L48.11,150.18 L48.24,150.40 L48.54,150.70 L48.98,151.07 L49.49,151.53 L50.01,152.04 L50.48,152.59 L50.85,153.14 L51.05,153.65 L51.07,154.07 L50.90,154.38 L50.55,154.55 L50.05,154.58 L49.43,154.46 L48.76,154.23 L48.09,153.93 L47.47,153.59 L46.93,153.29 L46.51,153.06 L46.21,152.97 L46.04,153.03 L45.97,153.28 L45.97,153.70 L46.02,154.27 L46.06,154.96 L46.06,155.69 L46.01,156.42 L45.87,157.06 L45.66,157.56 L45.38,157.88 L45.04,157.98 L44.67,157.85 L44.29,157.51 L43.94,157.00 L43.63,156.36 L43.37,155.67 L43.17,154.99 L43.00,154.39 L42.86,153.94 L42.72,153.66 L42.55,153.58 L42.33,153.71 L42.03,154.01 L41.66,154.45 L41.20,154.96 L40.69,155.48 L40.14,155.95 L39.59,156.32 L39.08,156.52 L38.66,156.54 L38.35,156.37 L38.18,156.02 L38.15,155.52 L38.27,154.90 L38.50,154.23 L38.80,153.56 L39.14,152.94 L39.44,152.40 L39.67,151.98 L39.76,151.68 L39.70,151.51 L39.45,151.44 L39.03,151.44 L38.46,151.49 L37.77,151.53 L37.04,151.53 L36.31,151.48 L35.67,151.34 L35.17,151.13 L34.85,150.85 L34.75,150.51 L34.88,150.14 L35.22,149.76 L35.73,149.41 L36.37,149.10 L37.06,148.84 L37.74,148.64 L38.34,148.47 L38.79,148.33 L39.07,148.19 L39.15,148.02 L39.02,147.80 L38.72,147.50 L38.28,147.13 L37.77,146.67 L37.25,146.16 L36.78,145.61 L36.41,145.06 L36.21,144.55 L36.19,144.13 L36.36,143.82 L36.71,143.65 L37.21,143.62 L37.83,143.74 L38.50,143.97 L39.17,144.27 L39.79,144.61 L40.33,144.91 L40.75,145.14 L41.05,145.23 L41.22,145.17 L41.29,144.92 L41.29,144.50 L41.24,143.93 L41.20,143.24 L41.20,142.51 L41.25,141.78 L41.39,141.14 L41.60,140.64 L41.88,140.32 L42.22,140.22 L42.59,140.35 L42.97,140.69 L43.32,141.20 L43.63,141.84 L43.89,142.53 L44.09,143.21 L44.26,143.81 L44.40,144.26 L44.54,144.54 L44.71,144.62 L44.93,144.49 L45.23,144.19 L45.60,143.75 L46.06,143.24 L46.57,142.72 L47.12,142.25 L47.67,141.88 L48.18,141.68 L48.60,141.66 L48.91,141.83 L49.08,142.18 L49.11,142.68 L48.99,143.30 L48.76,143.97 L48.46,144.64 L48.12,145.26 L47.82,145.80 L47.59,146.22 L47.50,146.52 L47.56,146.69 L47.81,146.76 L48.23,146.76 L48.80,146.71 L49.49,146.67 L50.22,146.67 L50.95,146.72 L51.59,146.86 L52.09,147.07 L52.41,147.35 L52.51,147.69 L52.38,148.06 L52.04,148.44 L51.53,148.79 L50.89,149.10Z" stroke="#141414" stroke-width="1.1" fill="none"/><rect x="56.16" y="135.60" width="25.43" height="25.60" fill="#cecece" /><rect x="56.16" y="135.60" width="25.43" height="1.30" fill="#f8f8f8" /><rect x="56.16" y="135.60" width="1.30" height="25.60" fill="#f8f8f8" /><rect x="56.16" y="159.60" width="25.43" height="1.60" fill="#7c7c7c" /><rect x="79.99" y="135.60" width="1.60" height="25.60" fill="#7c7c7c" /><path d="M60.64,145.00 L60.61,144.61 L60.60,144.22 L60.62,143.84 L60.67,143.50 L60.75,143.19 L60.86,142.92 L61.01,142.70 L61.19,142.54 L61.40,142.45 L61.63,142.42 L61.89,142.45 L62.16,142.54 L62.44,142.69 L62.73,142.88 L63.01,143.12 L63.29,143.39 L63.56,143.68 L63.82,143.98 L64.06,144.27 L64.29,144.55 L64.49,144.81 L64.68,145.03 L64.86,145.20 L65.02,145.33 L65.18,145.39 L65.33,145.40 L65.48,145.35 L65.63,145.24 L65.78,145.07 L65.95,144.85 L66.13,144.60 L66.32,144.31 L66.53,144.00 L66.76,143.68 L67.00,143.37 L67.25,143.07 L67.52,142.79 L67.79,142.56 L68.06,142.36 L68.32,142.23 L68.58,142.15 L68.82,142.13 L69.05,142.19 L69.25,142.30 L69.43,142.48 L69.58,142.71 L69.69,143.00 L69.78,143.33 L69.84,143.69 L69.87,144.07 L69.88,144.47 L69.88,144.86 L69.86,145.25 L69.84,145.61 L69.82,145.95 L69.80,146.25 L69.81,146.51 L69.84,146.73 L69.90,146.90 L70.00,147.01 L70.13,147.09 L70.30,147.12 L70.52,147.11 L70.78,147.07 L71.07,147.01 L71.40,146.93 L71.76,146.84 L72.14,146.76 L72.52,146.68 L72.92,146.62 L73.30,146.59 L73.66,146.58 L74.00,146.61 L74.30,146.68 L74.56,146.78 L74.77,146.93 L74.91,147.11 L75.00,147.32 L75.03,147.56 L75.00,147.83 L74.91,148.12 L74.77,148.42 L74.58,148.72 L74.36,149.03 L74.11,149.33 L73.84,149.62 L73.56,149.90 L73.30,150.16 L73.05,150.40 L72.83,150.62 L72.64,150.82 L72.51,151.01 L72.42,151.18 L72.39,151.33 L72.43,151.48 L72.52,151.62 L72.67,151.76 L72.87,151.90 L73.12,152.05 L73.41,152.21 L73.73,152.38 L74.06,152.57 L74.40,152.77 L74.73,152.98 L75.04,153.21 L75.33,153.45 L75.57,153.70 L75.76,153.95 L75.90,154.20 L75.98,154.45 L75.98,154.69 L75.93,154.91 L75.80,155.11 L75.62,155.30 L75.37,155.46 L75.08,155.59 L74.74,155.70 L74.38,155.78 L73.99,155.84 L73.60,155.88" stroke="#141414" stroke-width="1.1" fill="none"/><rect x="5.30" y="161.20" width="25.43" height="25.60" fill="#cecece" /><rect x="5.30" y="161.20" width="25.43" height="1.30" fill="#f8f8f8" /><rect x="5.30" y="161.20" width="1.30" height="25.60" fill="#f8f8f8" /><rect x="5.30" y="185.20" width="25.43" height="1.60" fill="#7c7c7c" /><rect x="29.13" y="161.20" width="1.60" height="25.60" fill="#7c7c7c" /><path d="M9.50,181.90 Q11.06,180.04 13.14,178.78 L26.18,167.60 Q27.22,166.97 27.70,166.30" stroke="#141414" stroke-width="1.0" fill="none"/><ellipse cx="14.44" cy="180.30" rx="1.6" ry="1.8" stroke="#141414" stroke-width="1.0" fill="none"/><ellipse cx="17.17" cy="177.96" rx="1.6" ry="1.8" stroke="#141414" stroke-width="1.0" fill="none"/><ellipse cx="19.90" cy="175.62" rx="1.6" ry="1.8" stroke="#141414" stroke-width="1.0" fill="none"/><ellipse cx="22.63" cy="173.28" rx="1.6" ry="1.8" stroke="#141414" stroke-width="1.0" fill="none"/><ellipse cx="25.36" cy="170.94" rx="1.6" ry="1.8" stroke="#141414" stroke-width="1.0" fill="none"/><rect x="30.73" y="161.20" width="25.43" height="25.60" fill="#cecece" /><rect x="30.73" y="161.20" width="25.43" height="1.30" fill="#f8f8f8" /><rect x="30.73" y="161.20" width="1.30" height="25.60" fill="#f8f8f8" /><rect x="30.73" y="185.20" width="25.43" height="1.60" fill="#7c7c7c" /><rect x="54.56" y="161.20" width="1.60" height="25.60" fill="#7c7c7c" /><circle cx="43.63" cy="175.90" r="6.4" fill="none" stroke="#6a6a6a" stroke-width="3.6"/><circle cx="43.63" cy="175.90" r="8.2" fill="none" stroke="#2a2a2a" stroke-width="0.8"/><circle cx="43.63" cy="175.90" r="4.6" fill="none" stroke="#2a2a2a" stroke-width="0.8"/><circle cx="43.63" cy="175.90" r="6.4" fill="none" stroke="#b4b4b4" stroke-width="1.4" stroke-dasharray="0.9,1.1"/><rect x="56.16" y="161.20" width="25.43" height="25.60" fill="#cecece" /><rect x="56.16" y="161.20" width="25.43" height="1.30" fill="#f8f8f8" /><rect x="56.16" y="161.20" width="1.30" height="25.60" fill="#f8f8f8" /><rect x="56.16" y="185.20" width="25.43" height="1.60" fill="#7c7c7c" /><rect x="79.99" y="161.20" width="1.60" height="25.60" fill="#7c7c7c" /><path d="M60.67,170.56 L61.20,170.25 L61.75,169.98 L62.31,169.74 L62.89,169.54 L63.48,169.38 L64.08,169.25 L64.68,169.16 L65.29,169.11 L65.90,169.10 L66.51,169.13 L67.12,169.20 L67.72,169.30 L68.32,169.45 L68.90,169.63 L69.47,169.85 L70.03,170.10 L70.57,170.39 L71.09,170.71 L71.58,171.07 L72.06,171.45 L72.51,171.87 L72.93,172.31 L73.32,172.78 L73.68,173.28 L74.01,173.79 L74.31,174.33 L74.57,174.88 L74.79,175.45 L74.98,176.03 L75.13,176.62 L75.25,177.22 L75.32,177.83 L75.36,178.44 L75.35,179.05 L75.31,179.66 L75.23,180.27 L75.11,180.87 L74.96,181.46 L74.76,182.04 L74.53,182.60" stroke="#141414" stroke-width="1.0" fill="none"/><circle cx="64.24" cy="171.25" r="1.65" stroke="#141414" stroke-width="1.0" fill="none"/><circle cx="67.69" cy="171.35" r="1.65" stroke="#141414" stroke-width="1.0" fill="none"/><circle cx="70.75" cy="172.96" r="1.65" stroke="#141414" stroke-width="1.0" fill="none"/><circle cx="72.77" cy="175.76" r="1.65" stroke="#141414" stroke-width="1.0" fill="none"/><circle cx="73.35" cy="179.17" r="1.65" stroke="#141414" stroke-width="1.0" fill="none"/><rect x="4.50" y="187.00" width="77.00" height="0.70" fill="#e4e4e4" /><rect x="4.50" y="192.40" width="77.00" height="1.10" fill="#e8e8e8" /><rect x="4.50" y="193.70" width="77.00" height="1.20" fill="#b6b6b6" /><rect x="5.30" y="199.80" width="25.43" height="25.60" fill="#cecece" /><rect x="5.30" y="199.80" width="25.43" height="1.30" fill="#f8f8f8" /><rect x="5.30" y="199.80" width="1.30" height="25.60" fill="#f8f8f8" /><rect x="5.30" y="223.80" width="25.43" height="1.60" fill="#7c7c7c" /><rect x="29.13" y="199.80" width="1.60" height="25.60" fill="#7c7c7c" /><rect x="11.10" y="208.40" width="14.6" height="9.8" fill="#8c8c8c" stroke="#222" stroke-width="1.1"/><rect x="30.73" y="199.80" width="25.43" height="25.60" fill="#cecece" /><rect x="30.73" y="199.80" width="25.43" height="1.30" fill="#f8f8f8" /><rect x="30.73" y="199.80" width="1.30" height="25.60" fill="#f8f8f8" /><rect x="30.73" y="223.80" width="25.43" height="1.60" fill="#7c7c7c" /><rect x="54.56" y="199.80" width="1.60" height="25.60" fill="#7c7c7c" /><ellipse cx="43.83" cy="212.70" rx="7.8" ry="4.6" fill="#8c8c8c" stroke="#222" stroke-width="1.0"/><rect x="56.16" y="199.80" width="25.43" height="25.60" fill="#cecece" /><rect x="56.16" y="199.80" width="25.43" height="1.30" fill="#f8f8f8" /><rect x="56.16" y="199.80" width="1.30" height="25.60" fill="#f8f8f8" /><rect x="56.16" y="223.80" width="25.43" height="1.60" fill="#7c7c7c" /><rect x="79.99" y="199.80" width="1.60" height="25.60" fill="#7c7c7c" /><circle cx="68.86" cy="212.80" r="4.1" fill="#000"/><rect x="5.30" y="225.40" width="25.43" height="25.60" fill="#cecece" /><rect x="5.30" y="225.40" width="25.43" height="1.30" fill="#f8f8f8" /><rect x="5.30" y="225.40" width="1.30" height="25.60" fill="#f8f8f8" /><rect x="5.30" y="249.40" width="25.43" height="1.60" fill="#7c7c7c" /><rect x="29.13" y="225.40" width="1.60" height="25.60" fill="#7c7c7c" /><path d="M8.80,247.80 L8.80,244.20 L13.20,244.20 L13.20,240.40 L17.50,240.40 L17.50,236.60 L21.90,236.60 L21.90,232.80 L26.80,232.80 L26.80,229.50" fill="none" stroke="#000" stroke-width="1.7"/><rect x="30.73" y="225.40" width="25.43" height="25.60" fill="#cecece" /><rect x="30.73" y="225.40" width="25.43" height="1.30" fill="#f8f8f8" /><rect x="30.73" y="225.40" width="1.30" height="25.60" fill="#f8f8f8" /><rect x="30.73" y="249.40" width="25.43" height="1.60" fill="#7c7c7c" /><rect x="54.56" y="225.40" width="1.60" height="25.60" fill="#7c7c7c" /><text x="33.33" y="240.10" font-family="Liberation Serif" font-size="12.5" fill="#111" textLength="7.6" lengthAdjust="spacingAndGlyphs">T</text><text x="39.93" y="244.90" font-family="Liberation Serif" font-weight="bold" font-size="12.5" fill="#3a38a8" textLength="8.4" lengthAdjust="spacingAndGlyphs">T</text><rect x="56.16" y="225.40" width="25.43" height="25.60" fill="#cecece" /><rect x="56.16" y="225.40" width="25.43" height="1.30" fill="#f8f8f8" /><rect x="56.16" y="225.40" width="1.30" height="25.60" fill="#f8f8f8" /><rect x="56.16" y="249.40" width="25.43" height="1.60" fill="#7c7c7c" /><rect x="79.99" y="225.40" width="1.60" height="25.60" fill="#7c7c7c" /><text x="58.56" y="241.10" font-family="Liberation Serif" font-size="10" fill="#4a48b8" textLength="20.6" lengthAdjust="spacingAndGlyphs">T<tspan dy="1.6">E</tspan><tspan dy="-1.6">X</tspan></text><rect x="4.50" y="251.20" width="77.00" height="0.70" fill="#e4e4e4" /><rect x="4.50" y="256.20" width="77.00" height="1.10" fill="#e8e8e8" /><rect x="4.50" y="257.50" width="77.00" height="1.20" fill="#b6b6b6" /><rect x="5.30" y="263.60" width="25.43" height="25.60" fill="#cecece" /><rect x="5.30" y="263.60" width="25.43" height="1.30" fill="#f8f8f8" /><rect x="5.30" y="263.60" width="1.30" height="25.60" fill="#f8f8f8" /><rect x="5.30" y="287.60" width="25.43" height="1.60" fill="#7c7c7c" /><rect x="29.13" y="263.60" width="1.60" height="25.60" fill="#7c7c7c" /><path d="M11.80,275.20 A7.2,6.6 0 1 1 17.80,283.50" fill="none" stroke="#1a3a9a" stroke-width="3.6"/><path d="M11.80,275.20 A7.2,6.6 0 1 1 17.80,283.50" fill="none" stroke="#7ab8ec" stroke-width="1.8"/><path d="M7.90,279.50 L9.90,271.90 L16.90,276.30 Z" fill="#3a78d0" stroke="#1a3a9a" stroke-width="1"/><rect x="30.73" y="263.60" width="25.43" height="25.60" fill="#cecece" /><rect x="30.73" y="263.60" width="25.43" height="1.30" fill="#f8f8f8" /><rect x="30.73" y="263.60" width="1.30" height="25.60" fill="#f8f8f8" /><rect x="30.73" y="287.60" width="25.43" height="1.60" fill="#7c7c7c" /><rect x="54.56" y="263.60" width="1.60" height="25.60" fill="#7c7c7c" /><path d="M38.13,266.90 L50.13,266.90 L53.13,269.90 L53.13,286.30 L38.13,286.30 Z" fill="#f4f8fc" stroke="#2a2a2a" stroke-width="0.9"/><rect x="38.93" y="278.90" width="13.6" height="6.8" fill="#b8dcf4"/><circle cx="42.33" cy="276.90" r="5.9" fill="#1a1a1a"/><circle cx="40.93" cy="275.30" r="2.2" fill="#6a6a6a" opacity="0.7"/><path d="M36.53,270.90 L34.53,268.30" stroke="#e0b040" stroke-width="1.2"/><rect x="56.16" y="263.60" width="25.43" height="25.60" fill="#cecece" /><rect x="56.16" y="263.60" width="25.43" height="1.30" fill="#f8f8f8" /><rect x="56.16" y="263.60" width="1.30" height="25.60" fill="#f8f8f8" /><rect x="56.16" y="287.60" width="25.43" height="1.60" fill="#7c7c7c" /><rect x="79.99" y="263.60" width="1.60" height="25.60" fill="#7c7c7c" /><path d="M76.66,270.50 A7,6 0 0 0 63.76,275.10" fill="none" stroke="#1a3a8a" stroke-width="3.4"/><path d="M76.66,270.50 A7,6 0 0 0 63.76,275.10" fill="none" stroke="#6ab0e8" stroke-width="1.6"/><path d="M58.56,274.30 L68.36,274.30 L63.56,279.90 Z" fill="#3a88d8" stroke="#1a3a8a" stroke-width="0.9"/><path d="M62.76,284.10 A7,6 0 0 0 74.76,279.30" fill="none" stroke="#1a1a1a" stroke-width="3.4"/><path d="M62.76,284.10 A7,6 0 0 0 74.76,279.30" fill="none" stroke="#7a7a7a" stroke-width="1.4"/><path d="M69.76,280.10 L79.36,280.10 L74.56,274.30 Z" fill="#4a4a4a" stroke="#1a1a1a" stroke-width="0.9"/><rect x="4.50" y="289.40" width="77.00" height="0.70" fill="#e4e4e4" /><rect x="4.50" y="295.20" width="77.00" height="1.10" fill="#e8e8e8" /><rect x="4.50" y="296.50" width="77.00" height="1.20" fill="#b6b6b6" /><rect x="5.30" y="302.60" width="25.43" height="25.60" fill="#cecece" /><rect x="5.30" y="302.60" width="25.43" height="1.30" fill="#f8f8f8" /><rect x="5.30" y="302.60" width="1.30" height="25.60" fill="#f8f8f8" /><rect x="5.30" y="326.60" width="25.43" height="1.60" fill="#7c7c7c" /><rect x="29.13" y="302.60" width="1.60" height="25.60" fill="#7c7c7c" /><path d="M17.90,305.90 L21.90,309.90 L19.90,309.90 L19.90,313.90 L23.90,313.90 L23.90,311.90 L27.90,315.90 L23.90,319.90 L23.90,317.90 L19.90,317.90 L19.90,321.90 L21.90,321.90 L17.90,325.90 L13.90,321.90 L15.90,321.90 L15.90,317.90 L11.90,317.90 L11.90,319.90 L7.90,315.90 L11.90,311.90 L11.90,313.90 L15.90,313.90 L15.90,309.90 L13.90,309.90 Z" fill="#9ccfee" stroke="#2a4a6a" stroke-width="0.9"/><rect x="30.73" y="302.60" width="25.43" height="25.60" fill="#cecece" /><rect x="30.73" y="302.60" width="25.43" height="1.30" fill="#f8f8f8" /><rect x="30.73" y="302.60" width="1.30" height="25.60" fill="#f8f8f8" /><rect x="30.73" y="326.60" width="25.43" height="1.60" fill="#7c7c7c" /><rect x="54.56" y="302.60" width="1.60" height="25.60" fill="#7c7c7c" /><rect x="36.73" y="312.30" width="15.6" height="12.8" fill="#b4dcf4" stroke="#1a2a3a" stroke-width="1.3"/><rect x="33.73" y="306.90" width="9" height="8.6" fill="#9cc8ec" stroke="#1a2a3a" stroke-width="1.1"/><path d="M43.73,307.90 L50.73,307.90 M34.73,318.30 L34.73,321.90 M36.73,321.70 L47.73,321.70 M45.73,316.70 L50.23,322.20" stroke="#1a2a3a" stroke-width="0.8" stroke-dasharray="1,1"/><rect x="56.16" y="302.60" width="25.43" height="25.60" fill="#cecece" /><rect x="56.16" y="302.60" width="25.43" height="1.30" fill="#f8f8f8" /><rect x="56.16" y="302.60" width="1.30" height="25.60" fill="#f8f8f8" /><rect x="56.16" y="326.60" width="25.43" height="1.60" fill="#7c7c7c" /><rect x="79.99" y="302.60" width="1.60" height="25.60" fill="#7c7c7c" /><rect x="59.96" y="317.50" width="9" height="6.8" fill="#a8d8f4" stroke="#1a2a3a" stroke-width="1.3"/><rect x="69.96" y="311.10" width="8.6" height="6.6" fill="#c4ecf8" stroke="#1a2a3a" stroke-width="1.3"/><path d="M62.36,315.30 A3.8,3.8 0 1 1 67.76,311.30" fill="none" stroke="#1a4a8a" stroke-width="2"/><rect x="5.30" y="328.20" width="25.43" height="25.60" fill="#cecece" /><rect x="5.30" y="328.20" width="25.43" height="1.30" fill="#f8f8f8" /><rect x="5.30" y="328.20" width="1.30" height="25.60" fill="#f8f8f8" /><rect x="5.30" y="352.20" width="25.43" height="1.60" fill="#7c7c7c" /><rect x="29.13" y="328.20" width="1.60" height="25.60" fill="#7c7c7c" /><path d="M9.10,341.30 Q8.10,333.30 17.30,332.90 Q28.30,332.90 28.30,340.70 Q28.30,349.90 18.30,349.90 Q8.70,349.90 9.10,341.30 Z" fill="#c4e4f4" stroke="#2a3a4a" stroke-width="1.0"/><circle cx="11.90" cy="337.30" r="1.8" fill="#f4f4f4" stroke="#3a3a3a" stroke-width="0.5"/><circle cx="16.30" cy="335.50" r="1.8" fill="#f4f4f4" stroke="#3a3a3a" stroke-width="0.5"/><circle cx="22.90" cy="337.70" r="1.8" fill="#2a78c8" stroke="#3a3a3a" stroke-width="0.5"/><circle cx="22.50" cy="343.30" r="1.8" fill="#2a9898" stroke="#3a3a3a" stroke-width="0.5"/><circle cx="17.90" cy="345.90" r="1.8" fill="#2aa02a" stroke="#3a3a3a" stroke-width="0.5"/><circle cx="12.70" cy="343.90" r="1.8" fill="#d02a4a" stroke="#3a3a3a" stroke-width="0.5"/><rect x="30.73" y="328.20" width="25.43" height="25.60" fill="#cecece" /><rect x="30.73" y="328.20" width="25.43" height="1.30" fill="#f8f8f8" /><rect x="30.73" y="328.20" width="1.30" height="25.60" fill="#f8f8f8" /><rect x="30.73" y="352.20" width="25.43" height="1.60" fill="#7c7c7c" /><rect x="54.56" y="328.20" width="1.60" height="25.60" fill="#7c7c7c" /><rect x="35.73" y="332.30" width="14.6" height="17.4" fill="#f8f8f8" stroke="#2a2a2a" stroke-width="0.9"/><path d="M35.73,335.70 L50.33,335.70" stroke="#a0a0b0" stroke-width="0.6"/><path d="M35.73,339.10 L50.33,339.10" stroke="#a0a0b0" stroke-width="0.6"/><path d="M35.73,342.50 L50.33,342.50" stroke="#a0a0b0" stroke-width="0.6"/><path d="M35.73,345.90 L50.33,345.90" stroke="#a0a0b0" stroke-width="0.6"/><path d="M40.53,332.30 L40.53,349.70" stroke="#a0a0b0" stroke-width="0.6"/><rect x="36.13" y="346.10" width="13.8" height="3.2" fill="#a8d4f0"/><path d="M53.13,333.10 L40.93,345.90" stroke="#2a3a5a" stroke-width="3.4"/><path d="M53.13,333.10 L40.93,345.90" stroke="#a8d4f4" stroke-width="1.8"/><path d="M41.33,343.50 L39.13,348.10 L43.33,345.90 Z" fill="#d8b890" stroke="#2a2a2a" stroke-width="0.6"/><rect x="56.16" y="328.20" width="25.43" height="25.60" fill="#cecece" /><rect x="56.16" y="328.20" width="25.43" height="1.30" fill="#f8f8f8" /><rect x="56.16" y="328.20" width="1.30" height="25.60" fill="#f8f8f8" /><rect x="56.16" y="352.20" width="25.43" height="1.60" fill="#7c7c7c" /><rect x="79.99" y="328.20" width="1.60" height="25.60" fill="#7c7c7c" /><path d="M61.16,346.90 L73.96,333.50 L78.76,337.30 L65.76,350.90 Z" fill="#a8d4f4" stroke="#2a3a5a" stroke-width="1.0"/><path d="M61.16,346.90 L65.96,341.90 L70.56,345.90 L65.76,350.90 Z" fill="#d86a6a" stroke="#6a2a2a" stroke-width="0.8"/><rect x="5.30" y="353.80" width="25.43" height="25.60" fill="#cecece" /><rect x="5.30" y="353.80" width="25.43" height="1.30" fill="#f8f8f8" /><rect x="5.30" y="353.80" width="1.30" height="25.60" fill="#f8f8f8" /><rect x="5.30" y="377.80" width="25.43" height="1.60" fill="#7c7c7c" /><rect x="29.13" y="353.80" width="1.60" height="25.60" fill="#7c7c7c" /><rect x="9.80" y="358.10" width="8.2" height="8.2" rx="0.6" fill="#c8f2fa" stroke="#15222a" stroke-width="1.3"/><rect x="13.50" y="363.10" width="8.2" height="8.2" rx="0.6" fill="#c8f2fa" stroke="#15222a" stroke-width="1.3"/><rect x="17.30" y="366.90" width="8.2" height="8.2" rx="0.6" fill="#c8f2fa" stroke="#15222a" stroke-width="1.3"/><rect x="30.73" y="353.80" width="25.43" height="25.60" fill="#cecece" /><rect x="30.73" y="353.80" width="25.43" height="1.30" fill="#f8f8f8" /><rect x="30.73" y="353.80" width="1.30" height="25.60" fill="#f8f8f8" /><rect x="30.73" y="377.80" width="25.43" height="1.60" fill="#7c7c7c" /><rect x="54.56" y="353.80" width="1.60" height="25.60" fill="#7c7c7c" /><rect x="34.53" y="358.50" width="8.2" height="8.2" rx="0.6" fill="#c8f4e8" stroke="#15222a" stroke-width="1.3"/><rect x="38.33" y="362.70" width="8.2" height="8.2" rx="0.6" fill="#a8d8f8" stroke="#15222a" stroke-width="1.3"/><rect x="41.93" y="366.50" width="8.2" height="8.2" rx="0.6" fill="#c8f4e8" stroke="#15222a" stroke-width="1.3"/><rect x="56.16" y="353.80" width="25.43" height="25.60" fill="#cecece" /><rect x="56.16" y="353.80" width="25.43" height="1.30" fill="#f8f8f8" /><rect x="56.16" y="353.80" width="1.30" height="25.60" fill="#f8f8f8" /><rect x="56.16" y="377.80" width="25.43" height="1.60" fill="#7c7c7c" /><rect x="79.99" y="353.80" width="1.60" height="25.60" fill="#7c7c7c" /><rect x="61.76" y="360.30" width="10" height="10" rx="0.6" fill="#c8f2fa" stroke="#15222a" stroke-width="1.3"/><rect x="66.16" y="364.30" width="10" height="10" rx="0.6" fill="#a8d8f8" stroke="#15222a" stroke-width="1.3"/><rect x="59.06" y="357.20" width="2.6" height="2.6" fill="#f8d8d8" stroke="#e03030" stroke-width="0.7"/><rect x="76.46" y="357.20" width="2.6" height="2.6" fill="#f8d8d8" stroke="#e03030" stroke-width="0.7"/><rect x="59.06" y="374.20" width="2.6" height="2.6" fill="#f8d8d8" stroke="#e03030" stroke-width="0.7"/><rect x="76.46" y="374.20" width="2.6" height="2.6" fill="#f8d8d8" stroke="#e03030" stroke-width="0.7"/><rect x="5.30" y="379.40" width="25.43" height="25.60" fill="#cecece" /><rect x="5.30" y="379.40" width="25.43" height="1.30" fill="#f8f8f8" /><rect x="5.30" y="379.40" width="1.30" height="25.60" fill="#f8f8f8" /><rect x="5.30" y="403.40" width="25.43" height="1.60" fill="#7c7c7c" /><rect x="29.13" y="379.40" width="1.60" height="25.60" fill="#7c7c7c" /><rect x="9.90" y="386.10" width="9" height="9" rx="0.6" fill="#c8f2fa" stroke="#15222a" stroke-width="1.3"/><rect x="14.30" y="389.50" width="9.6" height="9.6" rx="0.6" fill="#a8d8f8" stroke="#15222a" stroke-width="1.3"/><rect x="7.60" y="382.00" width="2.6" height="2.6" fill="#f8d8d8" stroke="#e03030" stroke-width="0.7"/><rect x="16.80" y="382.00" width="2.6" height="2.6" fill="#f8d8d8" stroke="#e03030" stroke-width="0.7"/><rect x="20.00" y="385.60" width="2.6" height="2.6" fill="#f8d8d8" stroke="#e03030" stroke-width="0.7"/><rect x="7.60" y="393.40" width="2.6" height="2.6" fill="#f8d8d8" stroke="#e03030" stroke-width="0.7"/><rect x="12.40" y="397.60" width="2.6" height="2.6" fill="#f8d8d8" stroke="#e03030" stroke-width="0.7"/><rect x="23.40" y="397.60" width="2.6" height="2.6" fill="#f8d8d8" stroke="#e03030" stroke-width="0.7"/><rect x="12.40" y="385.20" width="2.6" height="2.6" fill="#f8d8d8" stroke="#e03030" stroke-width="0.7"/><rect x="30.73" y="379.40" width="25.43" height="25.60" fill="#cecece" /><rect x="30.73" y="379.40" width="25.43" height="1.30" fill="#f8f8f8" /><rect x="30.73" y="379.40" width="1.30" height="25.60" fill="#f8f8f8" /><rect x="30.73" y="403.40" width="25.43" height="1.60" fill="#7c7c7c" /><rect x="54.56" y="379.40" width="1.60" height="25.60" fill="#7c7c7c" /><rect x="56.16" y="379.40" width="25.43" height="25.60" fill="#cecece" /><rect x="56.16" y="379.40" width="25.43" height="1.30" fill="#f8f8f8" /><rect x="56.16" y="379.40" width="1.30" height="25.60" fill="#f8f8f8" /><rect x="56.16" y="403.40" width="25.43" height="1.60" fill="#7c7c7c" /><rect x="79.99" y="379.40" width="1.60" height="25.60" fill="#7c7c7c" /><rect x="4.50" y="405.20" width="77.00" height="0.70" fill="#e4e4e4" /><rect x="4.50" y="410.10" width="77.00" height="1.10" fill="#e8e8e8" /><rect x="4.50" y="411.40" width="77.00" height="1.20" fill="#b6b6b6" /><rect x="5.30" y="417.50" width="25.43" height="25.60" fill="#a6a7b4" /><rect x="5.30" y="417.50" width="25.43" height="1.60" fill="#74747a" /><rect x="5.30" y="417.50" width="1.60" height="25.60" fill="#74747a" /><rect x="5.30" y="441.90" width="25.43" height="1.20" fill="#fafafa" /><rect x="29.53" y="417.50" width="1.20" height="25.60" fill="#fafafa" /><rect x="11.90" y="425.40" width="12" height="10" fill="#e02040" opacity="0.45"/><path d="M9.90,422.20 L9.90,438.60" stroke="#1a1a1a" stroke-width="0.9" stroke-dasharray="1.6,1.0"/><path d="M12.50,422.20 L12.50,438.60" stroke="#1a1a1a" stroke-width="0.9" stroke-dasharray="1.6,1.0"/><path d="M15.10,422.20 L15.10,438.60" stroke="#1a1a1a" stroke-width="0.9" stroke-dasharray="1.6,1.0"/><path d="M17.70,422.20 L17.70,438.60" stroke="#1a1a1a" stroke-width="0.9" stroke-dasharray="1.6,1.0"/><path d="M20.30,422.20 L20.30,438.60" stroke="#1a1a1a" stroke-width="0.9" stroke-dasharray="1.6,1.0"/><path d="M22.90,422.20 L22.90,438.60" stroke="#1a1a1a" stroke-width="0.9" stroke-dasharray="1.6,1.0"/><path d="M25.50,422.20 L25.50,438.60" stroke="#1a1a1a" stroke-width="0.9" stroke-dasharray="1.6,1.0"/><path d="M9.10,422.60 L27.10,422.60" stroke="#1a1a1a" stroke-width="0.9" stroke-dasharray="1.6,1.0"/><path d="M9.10,425.20 L27.10,425.20" stroke="#1a1a1a" stroke-width="0.9" stroke-dasharray="1.6,1.0"/><path d="M9.10,427.80 L27.10,427.80" stroke="#1a1a1a" stroke-width="0.9" stroke-dasharray="1.6,1.0"/><path d="M9.10,430.40 L27.10,430.40" stroke="#1a1a1a" stroke-width="0.9" stroke-dasharray="1.6,1.0"/><path d="M9.10,433.00 L27.10,433.00" stroke="#1a1a1a" stroke-width="0.9" stroke-dasharray="1.6,1.0"/><path d="M9.10,435.60 L27.10,435.60" stroke="#1a1a1a" stroke-width="0.9" stroke-dasharray="1.6,1.0"/><path d="M9.10,438.20 L27.10,438.20" stroke="#1a1a1a" stroke-width="0.9" stroke-dasharray="1.6,1.0"/><rect x="30.73" y="417.50" width="25.43" height="25.60" fill="#cecece" /><rect x="30.73" y="417.50" width="25.43" height="1.30" fill="#f8f8f8" /><rect x="30.73" y="417.50" width="1.30" height="25.60" fill="#f8f8f8" /><rect x="30.73" y="441.50" width="25.43" height="1.60" fill="#7c7c7c" /><rect x="54.56" y="417.50" width="1.60" height="25.60" fill="#7c7c7c" /><rect x="56.16" y="417.50" width="25.43" height="25.60" fill="#cecece" /><rect x="56.16" y="417.50" width="25.43" height="1.30" fill="#f8f8f8" /><rect x="56.16" y="417.50" width="1.30" height="25.60" fill="#f8f8f8" /><rect x="56.16" y="441.50" width="25.43" height="1.60" fill="#7c7c7c" /><rect x="79.99" y="417.50" width="1.60" height="25.60" fill="#7c7c7c" /><path d="M66.16,427.70 A4.2,4.2 0 1 0 70.96,427.70" fill="none" stroke="#0a0a0a" stroke-width="1.7"/><path d="M68.56,425.40 L68.56,431.00" stroke="#0a0a0a" stroke-width="1.7"/><rect x="4.50" y="443.30" width="77.00" height="0.70" fill="#e4e4e4" /><rect x="4.50" y="449.20" width="77.00" height="0.80" fill="#ececec" /><rect x="3.50" y="450.70" width="592.00" height="21.00" fill="#cecece" /><rect x="3.50" y="450.70" width="591.90" height="0.90" fill="#9a9a9a" /><rect x="3.50" y="451.60" width="591.90" height="1.20" fill="#dadada" /><rect x="3.50" y="468.40" width="591.90" height="1.20" fill="#eeeeee" /><rect x="3.50" y="469.60" width="591.90" height="1.90" fill="#c2c2c2" /><rect x="3.50" y="450.70" width="0.90" height="20.80" fill="#9a9a9a" /><rect x="313.70" y="451.60" width="1.00" height="18.00" fill="#f0f0f0" /><rect x="314.70" y="451.60" width="1.00" height="18.00" fill="#8e8e8e" /><rect x="315.70" y="451.60" width="1.20" height="18.00" fill="#e4e4e4" /><rect x="486.00" y="451.60" width="1.00" height="18.00" fill="#f0f0f0" /><rect x="487.00" y="451.60" width="1.00" height="18.00" fill="#8e8e8e" /><rect x="488.00" y="451.60" width="1.20" height="18.00" fill="#e4e4e4" /><rect x="594.40" y="450.70" width="1.00" height="20.80" fill="#f0f0f0" /><g style="will-change:transform"><text x="91.70" y="465.00" font-family="Liberation Sans" font-size="8.7" font-weight="bold" fill="#101010" textLength="68.30" lengthAdjust="spacingAndGlyphs" stroke="#101010" stroke-width="0.2">Current directory:</text></g><g style="will-change:transform"><text x="168.50" y="465.00" font-family="Liberation Sans" font-size="8.7" font-weight="bold" fill="#101010" textLength="60.20" lengthAdjust="spacingAndGlyphs" stroke="#101010" stroke-width="0.2">/home/psiche/</text></g><g style="will-change:transform"><text x="347.00" y="464.80" font-family="Liberation Sans" font-size="8.7" font-weight="bold" fill="#101010" textLength="110.00" lengthAdjust="spacingAndGlyphs" stroke="#101010" stroke-width="0.2">Current mode: Fermion Line</text></g><g style="will-change:transform"><text x="512.00" y="464.60" font-family="Liberation Sans" font-size="8.3" font-weight="bold" fill="#101010" textLength="59.00" lengthAdjust="spacingAndGlyphs" stroke="#101010" stroke-width="0.2">(x,y) = (58,596)</text></g><rect x="0.00" y="0.00" width="1.00" height="475.00" fill="#3a3a3a" /><rect x="1.00" y="12.00" width="2.00" height="463.00" fill="#f8f8f8" /><rect x="598.50" y="12.00" width="1.50" height="463.00" fill="#2e2e2e" /><rect x="596.80" y="12.00" width="1.70" height="463.00" fill="#f8f8f8" /><rect x="0.00" y="473.60" width="600.00" height="1.40" fill="#2a2a2a" /><rect x="1.00" y="471.80" width="598.00" height="1.80" fill="#f8f8f8" /><path d="M0.7,460.5 L3.3,460.5 L3.3,470.8 L14,470.8 L14,473.6 L0.7,473.6 Z" fill="#5a60a8"/><path d="M599.3,461 L596.6,461 L596.6,471.4 L586,471.4 L586,473.6 L599.3,473.6 Z" fill="#5a60a8"/><rect x="0.00" y="450.00" width="0.80" height="25.00" fill="#2a2a2a" /><rect x="0.00" y="473.60" width="600.00" height="1.40" fill="#2a2a2a" /></svg></body></html>
